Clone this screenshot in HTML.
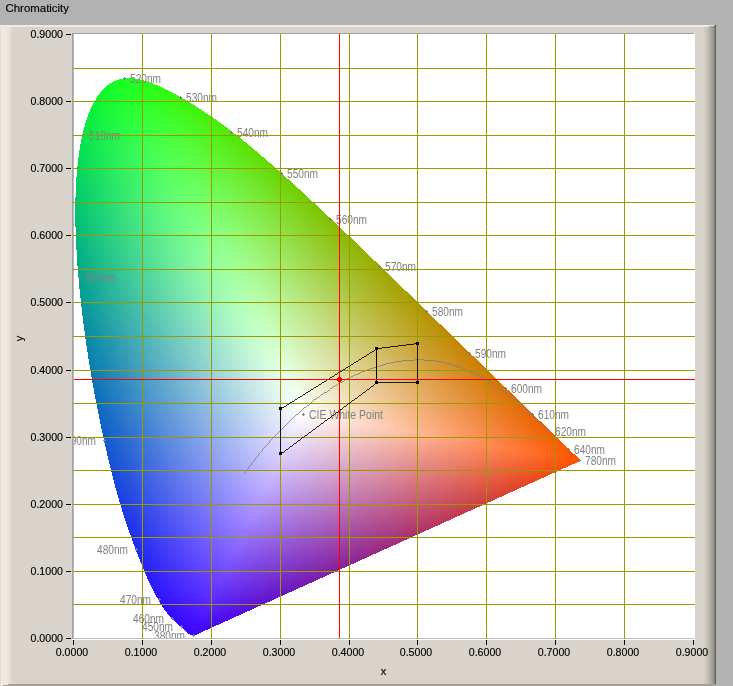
<!DOCTYPE html>
<html><head><meta charset="utf-8"><title>Chromaticity</title><style>html,body{margin:0;padding:0;background:#b2b2b2;overflow:hidden}svg{display:block;will-change:transform}</style></head><body>
<svg width="733" height="686" viewBox="0 0 733 686" font-family="'Liberation Sans', sans-serif">
<defs>
<linearGradient id="bl" x1="0" x2="1" y1="0" y2="0"><stop offset="0" stop-color="#d6d2c6"/><stop offset="0.08" stop-color="#efebe1"/><stop offset="0.6" stop-color="#ebe7dc"/><stop offset="1" stop-color="#d8d4cc"/></linearGradient>
<linearGradient id="br" x1="0" x2="1" y1="0" y2="0"><stop offset="0" stop-color="#d8d4cc"/><stop offset="0.3" stop-color="#c8c4ba"/><stop offset="0.7" stop-color="#a5a198"/><stop offset="0.88" stop-color="#8c8880"/><stop offset="1" stop-color="#4e4c47"/></linearGradient>
<clipPath id="pc"><rect x="74" y="34" width="621" height="604"/></clipPath>
<linearGradient id="w0" gradientUnits="userSpaceOnUse" x1="303.1" y1="413.7" x2="106.6" y2="453.8"><stop offset="0" stop-color="#ffffff"/><stop offset="1" stop-color="#0d67c1"/></linearGradient><linearGradient id="w1" gradientUnits="userSpaceOnUse" x1="303.1" y1="413.7" x2="105.9" y2="452.1"><stop offset="0" stop-color="#ffffff"/><stop offset="1" stop-color="#0c68c0"/></linearGradient><linearGradient id="w2" gradientUnits="userSpaceOnUse" x1="303.1" y1="413.7" x2="105.7" y2="451.6"><stop offset="0" stop-color="#ffffff"/><stop offset="1" stop-color="#0c6abf"/></linearGradient><linearGradient id="w3" gradientUnits="userSpaceOnUse" x1="303.1" y1="413.7" x2="105.7" y2="451.6"><stop offset="0" stop-color="#ffffff"/><stop offset="1" stop-color="#0c6bbe"/></linearGradient><linearGradient id="w4" gradientUnits="userSpaceOnUse" x1="303.1" y1="413.7" x2="105.7" y2="451.6"><stop offset="0" stop-color="#ffffff"/><stop offset="1" stop-color="#0c6cbd"/></linearGradient><linearGradient id="w5" gradientUnits="userSpaceOnUse" x1="303.1" y1="413.7" x2="105.7" y2="451.6"><stop offset="0" stop-color="#ffffff"/><stop offset="1" stop-color="#0b6dbc"/></linearGradient><linearGradient id="w6" gradientUnits="userSpaceOnUse" x1="303.1" y1="413.7" x2="105.7" y2="451.6"><stop offset="0" stop-color="#ffffff"/><stop offset="1" stop-color="#0b6fbb"/></linearGradient><linearGradient id="w7" gradientUnits="userSpaceOnUse" x1="303.1" y1="413.7" x2="104.6" y2="449.5"><stop offset="0" stop-color="#ffffff"/><stop offset="1" stop-color="#0b70ba"/></linearGradient><linearGradient id="w8" gradientUnits="userSpaceOnUse" x1="303.1" y1="413.7" x2="104.5" y2="449.4"><stop offset="0" stop-color="#ffffff"/><stop offset="1" stop-color="#0b71b9"/></linearGradient><linearGradient id="w9" gradientUnits="userSpaceOnUse" x1="303.1" y1="413.7" x2="104.5" y2="449.4"><stop offset="0" stop-color="#ffffff"/><stop offset="1" stop-color="#0a72b8"/></linearGradient><linearGradient id="w10" gradientUnits="userSpaceOnUse" x1="303.1" y1="413.7" x2="104.5" y2="449.4"><stop offset="0" stop-color="#ffffff"/><stop offset="1" stop-color="#0a74b7"/></linearGradient><linearGradient id="w11" gradientUnits="userSpaceOnUse" x1="303.1" y1="413.7" x2="104.5" y2="449.4"><stop offset="0" stop-color="#ffffff"/><stop offset="1" stop-color="#0a75b6"/></linearGradient><linearGradient id="w12" gradientUnits="userSpaceOnUse" x1="303.1" y1="413.7" x2="104.2" y2="448.8"><stop offset="0" stop-color="#ffffff"/><stop offset="1" stop-color="#0a76b5"/></linearGradient><linearGradient id="w13" gradientUnits="userSpaceOnUse" x1="303.1" y1="413.7" x2="103.2" y2="447.1"><stop offset="0" stop-color="#ffffff"/><stop offset="1" stop-color="#0978b4"/></linearGradient><linearGradient id="w14" gradientUnits="userSpaceOnUse" x1="303.1" y1="413.7" x2="103.2" y2="447.1"><stop offset="0" stop-color="#ffffff"/><stop offset="1" stop-color="#0979b2"/></linearGradient><linearGradient id="w15" gradientUnits="userSpaceOnUse" x1="303.1" y1="413.7" x2="103.2" y2="447.1"><stop offset="0" stop-color="#ffffff"/><stop offset="1" stop-color="#097ab1"/></linearGradient><linearGradient id="w16" gradientUnits="userSpaceOnUse" x1="303.1" y1="413.7" x2="103.2" y2="447.1"><stop offset="0" stop-color="#ffffff"/><stop offset="1" stop-color="#097cb0"/></linearGradient><linearGradient id="w17" gradientUnits="userSpaceOnUse" x1="303.1" y1="413.7" x2="103.2" y2="447.1"><stop offset="0" stop-color="#ffffff"/><stop offset="1" stop-color="#087daf"/></linearGradient><linearGradient id="w18" gradientUnits="userSpaceOnUse" x1="303.1" y1="413.7" x2="102.2" y2="445.4"><stop offset="0" stop-color="#ffffff"/><stop offset="1" stop-color="#087eae"/></linearGradient><linearGradient id="w19" gradientUnits="userSpaceOnUse" x1="303.1" y1="413.7" x2="101.7" y2="444.7"><stop offset="0" stop-color="#ffffff"/><stop offset="1" stop-color="#0880ad"/></linearGradient><linearGradient id="w20" gradientUnits="userSpaceOnUse" x1="303.1" y1="413.7" x2="101.7" y2="444.7"><stop offset="0" stop-color="#ffffff"/><stop offset="1" stop-color="#0881ab"/></linearGradient><linearGradient id="w21" gradientUnits="userSpaceOnUse" x1="303.1" y1="413.7" x2="101.7" y2="444.7"><stop offset="0" stop-color="#ffffff"/><stop offset="1" stop-color="#0783aa"/></linearGradient><linearGradient id="w22" gradientUnits="userSpaceOnUse" x1="303.1" y1="413.7" x2="101.7" y2="444.7"><stop offset="0" stop-color="#ffffff"/><stop offset="1" stop-color="#0784a9"/></linearGradient><linearGradient id="w23" gradientUnits="userSpaceOnUse" x1="303.1" y1="413.7" x2="101.1" y2="443.7"><stop offset="0" stop-color="#ffffff"/><stop offset="1" stop-color="#0786a8"/></linearGradient><linearGradient id="w24" gradientUnits="userSpaceOnUse" x1="303.1" y1="413.7" x2="100.0" y2="442.1"><stop offset="0" stop-color="#ffffff"/><stop offset="1" stop-color="#0787a6"/></linearGradient><linearGradient id="w25" gradientUnits="userSpaceOnUse" x1="303.1" y1="413.7" x2="100.0" y2="442.1"><stop offset="0" stop-color="#ffffff"/><stop offset="1" stop-color="#0689a5"/></linearGradient><linearGradient id="w26" gradientUnits="userSpaceOnUse" x1="303.1" y1="413.7" x2="100.0" y2="442.1"><stop offset="0" stop-color="#ffffff"/><stop offset="1" stop-color="#068aa4"/></linearGradient><linearGradient id="w27" gradientUnits="userSpaceOnUse" x1="303.1" y1="413.7" x2="100.0" y2="442.1"><stop offset="0" stop-color="#ffffff"/><stop offset="1" stop-color="#068ca2"/></linearGradient><linearGradient id="w28" gradientUnits="userSpaceOnUse" x1="303.1" y1="413.7" x2="99.2" y2="441.1"><stop offset="0" stop-color="#ffffff"/><stop offset="1" stop-color="#068da1"/></linearGradient><linearGradient id="w29" gradientUnits="userSpaceOnUse" x1="303.1" y1="413.7" x2="98.0" y2="439.4"><stop offset="0" stop-color="#ffffff"/><stop offset="1" stop-color="#058fa0"/></linearGradient><linearGradient id="w30" gradientUnits="userSpaceOnUse" x1="303.1" y1="413.7" x2="98.0" y2="439.4"><stop offset="0" stop-color="#ffffff"/><stop offset="1" stop-color="#05919e"/></linearGradient><linearGradient id="w31" gradientUnits="userSpaceOnUse" x1="303.1" y1="413.7" x2="98.0" y2="439.4"><stop offset="0" stop-color="#ffffff"/><stop offset="1" stop-color="#05929d"/></linearGradient><linearGradient id="w32" gradientUnits="userSpaceOnUse" x1="303.1" y1="413.7" x2="98.0" y2="439.4"><stop offset="0" stop-color="#ffffff"/><stop offset="1" stop-color="#05949b"/></linearGradient><linearGradient id="w33" gradientUnits="userSpaceOnUse" x1="303.1" y1="413.7" x2="96.5" y2="437.5"><stop offset="0" stop-color="#ffffff"/><stop offset="1" stop-color="#05969a"/></linearGradient><linearGradient id="w34" gradientUnits="userSpaceOnUse" x1="303.1" y1="413.7" x2="95.7" y2="436.6"><stop offset="0" stop-color="#ffffff"/><stop offset="1" stop-color="#049798"/></linearGradient><linearGradient id="w35" gradientUnits="userSpaceOnUse" x1="303.1" y1="413.7" x2="95.7" y2="436.6"><stop offset="0" stop-color="#ffffff"/><stop offset="1" stop-color="#049997"/></linearGradient><linearGradient id="w36" gradientUnits="userSpaceOnUse" x1="303.1" y1="413.7" x2="95.7" y2="436.6"><stop offset="0" stop-color="#ffffff"/><stop offset="1" stop-color="#049b95"/></linearGradient><linearGradient id="w37" gradientUnits="userSpaceOnUse" x1="303.1" y1="413.7" x2="95.1" y2="435.7"><stop offset="0" stop-color="#ffffff"/><stop offset="1" stop-color="#049d93"/></linearGradient><linearGradient id="w38" gradientUnits="userSpaceOnUse" x1="303.1" y1="413.7" x2="93.2" y2="433.6"><stop offset="0" stop-color="#ffffff"/><stop offset="1" stop-color="#039e92"/></linearGradient><linearGradient id="w39" gradientUnits="userSpaceOnUse" x1="303.1" y1="413.7" x2="93.2" y2="433.6"><stop offset="0" stop-color="#ffffff"/><stop offset="1" stop-color="#03a090"/></linearGradient><linearGradient id="w40" gradientUnits="userSpaceOnUse" x1="303.1" y1="413.7" x2="93.2" y2="433.6"><stop offset="0" stop-color="#ffffff"/><stop offset="1" stop-color="#03a28e"/></linearGradient><linearGradient id="w41" gradientUnits="userSpaceOnUse" x1="303.1" y1="413.7" x2="92.7" y2="433.0"><stop offset="0" stop-color="#ffffff"/><stop offset="1" stop-color="#03a48d"/></linearGradient><linearGradient id="w42" gradientUnits="userSpaceOnUse" x1="303.1" y1="413.7" x2="90.4" y2="430.4"><stop offset="0" stop-color="#ffffff"/><stop offset="1" stop-color="#03a68b"/></linearGradient><linearGradient id="w43" gradientUnits="userSpaceOnUse" x1="303.1" y1="413.7" x2="90.4" y2="430.4"><stop offset="0" stop-color="#ffffff"/><stop offset="1" stop-color="#03a889"/></linearGradient><linearGradient id="w44" gradientUnits="userSpaceOnUse" x1="303.1" y1="413.7" x2="90.4" y2="430.4"><stop offset="0" stop-color="#ffffff"/><stop offset="1" stop-color="#02aa87"/></linearGradient><linearGradient id="w45" gradientUnits="userSpaceOnUse" x1="303.1" y1="413.7" x2="89.1" y2="428.9"><stop offset="0" stop-color="#ffffff"/><stop offset="1" stop-color="#02ac85"/></linearGradient><linearGradient id="w46" gradientUnits="userSpaceOnUse" x1="303.1" y1="413.7" x2="87.1" y2="426.7"><stop offset="0" stop-color="#ffffff"/><stop offset="1" stop-color="#02ae83"/></linearGradient><linearGradient id="w47" gradientUnits="userSpaceOnUse" x1="303.1" y1="413.7" x2="87.1" y2="426.7"><stop offset="0" stop-color="#ffffff"/><stop offset="1" stop-color="#02b081"/></linearGradient><linearGradient id="w48" gradientUnits="userSpaceOnUse" x1="303.1" y1="413.7" x2="87.1" y2="426.7"><stop offset="0" stop-color="#ffffff"/><stop offset="1" stop-color="#02b27f"/></linearGradient><linearGradient id="w49" gradientUnits="userSpaceOnUse" x1="303.1" y1="413.7" x2="83.3" y2="422.5"><stop offset="0" stop-color="#ffffff"/><stop offset="1" stop-color="#02b57d"/></linearGradient><linearGradient id="w50" gradientUnits="userSpaceOnUse" x1="303.1" y1="413.7" x2="83.1" y2="422.3"><stop offset="0" stop-color="#ffffff"/><stop offset="1" stop-color="#02b77b"/></linearGradient><linearGradient id="w51" gradientUnits="userSpaceOnUse" x1="303.1" y1="413.7" x2="83.1" y2="422.3"><stop offset="0" stop-color="#ffffff"/><stop offset="1" stop-color="#01b979"/></linearGradient><linearGradient id="w52" gradientUnits="userSpaceOnUse" x1="303.1" y1="413.7" x2="79.6" y2="418.4"><stop offset="0" stop-color="#ffffff"/><stop offset="1" stop-color="#01bb76"/></linearGradient><linearGradient id="w53" gradientUnits="userSpaceOnUse" x1="303.1" y1="413.7" x2="78.5" y2="417.2"><stop offset="0" stop-color="#ffffff"/><stop offset="1" stop-color="#01be74"/></linearGradient><linearGradient id="w54" gradientUnits="userSpaceOnUse" x1="303.1" y1="413.7" x2="78.5" y2="417.2"><stop offset="0" stop-color="#ffffff"/><stop offset="1" stop-color="#01c072"/></linearGradient><linearGradient id="w55" gradientUnits="userSpaceOnUse" x1="303.1" y1="413.7" x2="74.1" y2="412.2"><stop offset="0" stop-color="#ffffff"/><stop offset="1" stop-color="#01c26f"/></linearGradient><linearGradient id="w56" gradientUnits="userSpaceOnUse" x1="303.1" y1="413.7" x2="73.2" y2="411.3"><stop offset="0" stop-color="#ffffff"/><stop offset="1" stop-color="#01c56d"/></linearGradient><linearGradient id="w57" gradientUnits="userSpaceOnUse" x1="303.1" y1="413.7" x2="72.5" y2="410.4"><stop offset="0" stop-color="#ffffff"/><stop offset="1" stop-color="#01c76a"/></linearGradient><linearGradient id="w58" gradientUnits="userSpaceOnUse" x1="303.1" y1="413.7" x2="67.6" y2="404.6"><stop offset="0" stop-color="#ffffff"/><stop offset="1" stop-color="#01ca68"/></linearGradient><linearGradient id="w59" gradientUnits="userSpaceOnUse" x1="303.1" y1="413.7" x2="67.6" y2="404.6"><stop offset="0" stop-color="#ffffff"/><stop offset="1" stop-color="#02cc65"/></linearGradient><linearGradient id="w60" gradientUnits="userSpaceOnUse" x1="303.1" y1="413.7" x2="63.8" y2="400.0"><stop offset="0" stop-color="#ffffff"/><stop offset="1" stop-color="#02cf62"/></linearGradient><linearGradient id="w61" gradientUnits="userSpaceOnUse" x1="303.1" y1="413.7" x2="61.3" y2="396.9"><stop offset="0" stop-color="#ffffff"/><stop offset="1" stop-color="#02d260"/></linearGradient><linearGradient id="w62" gradientUnits="userSpaceOnUse" x1="303.1" y1="413.7" x2="59.5" y2="394.6"><stop offset="0" stop-color="#ffffff"/><stop offset="1" stop-color="#02d45d"/></linearGradient><linearGradient id="w63" gradientUnits="userSpaceOnUse" x1="303.1" y1="413.7" x2="54.1" y2="387.4"><stop offset="0" stop-color="#ffffff"/><stop offset="1" stop-color="#02d75a"/></linearGradient><linearGradient id="w64" gradientUnits="userSpaceOnUse" x1="303.1" y1="413.7" x2="53.7" y2="386.8"><stop offset="0" stop-color="#ffffff"/><stop offset="1" stop-color="#03da57"/></linearGradient><linearGradient id="w65" gradientUnits="userSpaceOnUse" x1="303.1" y1="413.7" x2="46.1" y2="375.5"><stop offset="0" stop-color="#ffffff"/><stop offset="1" stop-color="#03dc54"/></linearGradient><linearGradient id="w66" gradientUnits="userSpaceOnUse" x1="303.1" y1="413.7" x2="46.0" y2="375.5"><stop offset="0" stop-color="#ffffff"/><stop offset="1" stop-color="#03df51"/></linearGradient><linearGradient id="w67" gradientUnits="userSpaceOnUse" x1="303.1" y1="413.7" x2="37.3" y2="360.7"><stop offset="0" stop-color="#ffffff"/><stop offset="1" stop-color="#04e24d"/></linearGradient><linearGradient id="w68" gradientUnits="userSpaceOnUse" x1="303.1" y1="413.7" x2="36.6" y2="359.3"><stop offset="0" stop-color="#ffffff"/><stop offset="1" stop-color="#05e44a"/></linearGradient><linearGradient id="w69" gradientUnits="userSpaceOnUse" x1="303.1" y1="413.7" x2="28.6" y2="342.5"><stop offset="0" stop-color="#ffffff"/><stop offset="1" stop-color="#05e747"/></linearGradient><linearGradient id="w70" gradientUnits="userSpaceOnUse" x1="303.1" y1="413.7" x2="26.3" y2="337.0"><stop offset="0" stop-color="#ffffff"/><stop offset="1" stop-color="#06ea44"/></linearGradient><linearGradient id="w71" gradientUnits="userSpaceOnUse" x1="303.1" y1="413.7" x2="20.6" y2="321.0"><stop offset="0" stop-color="#ffffff"/><stop offset="1" stop-color="#07ec40"/></linearGradient><linearGradient id="w72" gradientUnits="userSpaceOnUse" x1="303.1" y1="413.7" x2="16.5" y2="305.8"><stop offset="0" stop-color="#ffffff"/><stop offset="1" stop-color="#08ef3d"/></linearGradient><linearGradient id="w73" gradientUnits="userSpaceOnUse" x1="303.1" y1="413.7" x2="14.1" y2="294.0"><stop offset="0" stop-color="#ffffff"/><stop offset="1" stop-color="#09f139"/></linearGradient><linearGradient id="w74" gradientUnits="userSpaceOnUse" x1="303.1" y1="413.7" x2="11.0" y2="260.0"><stop offset="0" stop-color="#ffffff"/><stop offset="1" stop-color="#0af336"/></linearGradient><linearGradient id="w75" gradientUnits="userSpaceOnUse" x1="303.1" y1="413.7" x2="12.0" y2="238.1"><stop offset="0" stop-color="#ffffff"/><stop offset="1" stop-color="#0bf633"/></linearGradient><linearGradient id="w76" gradientUnits="userSpaceOnUse" x1="303.1" y1="413.7" x2="16.7" y2="210.2"><stop offset="0" stop-color="#ffffff"/><stop offset="1" stop-color="#0df82f"/></linearGradient><linearGradient id="w77" gradientUnits="userSpaceOnUse" x1="303.1" y1="413.7" x2="31.5" y2="168.8"><stop offset="0" stop-color="#ffffff"/><stop offset="1" stop-color="#0ff92c"/></linearGradient><linearGradient id="w78" gradientUnits="userSpaceOnUse" x1="303.1" y1="413.7" x2="58.1" y2="127.8"><stop offset="0" stop-color="#ffffff"/><stop offset="1" stop-color="#10fb29"/></linearGradient><linearGradient id="w79" gradientUnits="userSpaceOnUse" x1="303.1" y1="413.7" x2="93.1" y2="94.9"><stop offset="0" stop-color="#ffffff"/><stop offset="1" stop-color="#12fd25"/></linearGradient><linearGradient id="w80" gradientUnits="userSpaceOnUse" x1="303.1" y1="413.7" x2="140.8" y2="68.9"><stop offset="0" stop-color="#ffffff"/><stop offset="1" stop-color="#15fe22"/></linearGradient><linearGradient id="w81" gradientUnits="userSpaceOnUse" x1="303.1" y1="413.7" x2="198.2" y2="56.3"><stop offset="0" stop-color="#ffffff"/><stop offset="1" stop-color="#17fe1f"/></linearGradient><linearGradient id="w82" gradientUnits="userSpaceOnUse" x1="303.1" y1="413.7" x2="258.4" y2="61.4"><stop offset="0" stop-color="#ffffff"/><stop offset="1" stop-color="#1aff1d"/></linearGradient><linearGradient id="w83" gradientUnits="userSpaceOnUse" x1="303.1" y1="413.7" x2="311.6" y2="82.8"><stop offset="0" stop-color="#ffffff"/><stop offset="1" stop-color="#1cff1a"/></linearGradient><linearGradient id="w84" gradientUnits="userSpaceOnUse" x1="303.1" y1="413.7" x2="349.8" y2="111.9"><stop offset="0" stop-color="#ffffff"/><stop offset="1" stop-color="#1fff18"/></linearGradient><linearGradient id="w85" gradientUnits="userSpaceOnUse" x1="303.1" y1="413.7" x2="373.7" y2="139.7"><stop offset="0" stop-color="#ffffff"/><stop offset="1" stop-color="#22fe16"/></linearGradient><linearGradient id="w86" gradientUnits="userSpaceOnUse" x1="303.1" y1="413.7" x2="387.7" y2="162.5"><stop offset="0" stop-color="#ffffff"/><stop offset="1" stop-color="#25fd14"/></linearGradient><linearGradient id="w87" gradientUnits="userSpaceOnUse" x1="303.1" y1="413.7" x2="396.1" y2="180.7"><stop offset="0" stop-color="#ffffff"/><stop offset="1" stop-color="#29fc12"/></linearGradient><linearGradient id="w88" gradientUnits="userSpaceOnUse" x1="303.1" y1="413.7" x2="401.8" y2="196.4"><stop offset="0" stop-color="#ffffff"/><stop offset="1" stop-color="#2cfb10"/></linearGradient><linearGradient id="w89" gradientUnits="userSpaceOnUse" x1="303.1" y1="413.7" x2="405.5" y2="209.3"><stop offset="0" stop-color="#ffffff"/><stop offset="1" stop-color="#2ffa0f"/></linearGradient><linearGradient id="w90" gradientUnits="userSpaceOnUse" x1="303.1" y1="413.7" x2="407.6" y2="218.6"><stop offset="0" stop-color="#ffffff"/><stop offset="1" stop-color="#32f80e"/></linearGradient><linearGradient id="w91" gradientUnits="userSpaceOnUse" x1="303.1" y1="413.7" x2="408.9" y2="225.8"><stop offset="0" stop-color="#ffffff"/><stop offset="1" stop-color="#35f70c"/></linearGradient><linearGradient id="w92" gradientUnits="userSpaceOnUse" x1="303.1" y1="413.7" x2="409.9" y2="231.6"><stop offset="0" stop-color="#ffffff"/><stop offset="1" stop-color="#38f50b"/></linearGradient><linearGradient id="w93" gradientUnits="userSpaceOnUse" x1="303.1" y1="413.7" x2="410.7" y2="237.2"><stop offset="0" stop-color="#ffffff"/><stop offset="1" stop-color="#3bf30a"/></linearGradient><linearGradient id="w94" gradientUnits="userSpaceOnUse" x1="303.1" y1="413.7" x2="411.4" y2="242.8"><stop offset="0" stop-color="#ffffff"/><stop offset="1" stop-color="#3ef209"/></linearGradient><linearGradient id="w95" gradientUnits="userSpaceOnUse" x1="303.1" y1="413.7" x2="411.9" y2="248.4"><stop offset="0" stop-color="#ffffff"/><stop offset="1" stop-color="#41f008"/></linearGradient><linearGradient id="w96" gradientUnits="userSpaceOnUse" x1="303.1" y1="413.7" x2="412.3" y2="253.6"><stop offset="0" stop-color="#ffffff"/><stop offset="1" stop-color="#44ee08"/></linearGradient><linearGradient id="w97" gradientUnits="userSpaceOnUse" x1="303.1" y1="413.7" x2="412.6" y2="258.1"><stop offset="0" stop-color="#ffffff"/><stop offset="1" stop-color="#47ed07"/></linearGradient><linearGradient id="w98" gradientUnits="userSpaceOnUse" x1="303.1" y1="413.7" x2="412.8" y2="262.2"><stop offset="0" stop-color="#ffffff"/><stop offset="1" stop-color="#49eb06"/></linearGradient><linearGradient id="w99" gradientUnits="userSpaceOnUse" x1="303.1" y1="413.7" x2="412.9" y2="266.0"><stop offset="0" stop-color="#ffffff"/><stop offset="1" stop-color="#4ce906"/></linearGradient><linearGradient id="w100" gradientUnits="userSpaceOnUse" x1="303.1" y1="413.7" x2="413.0" y2="269.4"><stop offset="0" stop-color="#ffffff"/><stop offset="1" stop-color="#4ee805"/></linearGradient><linearGradient id="w101" gradientUnits="userSpaceOnUse" x1="303.1" y1="413.7" x2="413.0" y2="272.5"><stop offset="0" stop-color="#ffffff"/><stop offset="1" stop-color="#51e605"/></linearGradient><linearGradient id="w102" gradientUnits="userSpaceOnUse" x1="303.1" y1="413.7" x2="413.0" y2="275.2"><stop offset="0" stop-color="#ffffff"/><stop offset="1" stop-color="#53e404"/></linearGradient><linearGradient id="w103" gradientUnits="userSpaceOnUse" x1="303.1" y1="413.7" x2="413.0" y2="277.6"><stop offset="0" stop-color="#ffffff"/><stop offset="1" stop-color="#56e204"/></linearGradient><linearGradient id="w104" gradientUnits="userSpaceOnUse" x1="303.1" y1="413.7" x2="413.0" y2="279.7"><stop offset="0" stop-color="#ffffff"/><stop offset="1" stop-color="#58e104"/></linearGradient><linearGradient id="w105" gradientUnits="userSpaceOnUse" x1="303.1" y1="413.7" x2="413.0" y2="281.6"><stop offset="0" stop-color="#ffffff"/><stop offset="1" stop-color="#5adf03"/></linearGradient><linearGradient id="w106" gradientUnits="userSpaceOnUse" x1="303.1" y1="413.7" x2="413.0" y2="283.3"><stop offset="0" stop-color="#ffffff"/><stop offset="1" stop-color="#5cde03"/></linearGradient><linearGradient id="w107" gradientUnits="userSpaceOnUse" x1="303.1" y1="413.7" x2="413.0" y2="284.8"><stop offset="0" stop-color="#ffffff"/><stop offset="1" stop-color="#5edc03"/></linearGradient><linearGradient id="w108" gradientUnits="userSpaceOnUse" x1="303.1" y1="413.7" x2="413.0" y2="286.1"><stop offset="0" stop-color="#ffffff"/><stop offset="1" stop-color="#60da03"/></linearGradient><linearGradient id="w109" gradientUnits="userSpaceOnUse" x1="303.1" y1="413.7" x2="413.0" y2="287.6"><stop offset="0" stop-color="#ffffff"/><stop offset="1" stop-color="#62d902"/></linearGradient><linearGradient id="w110" gradientUnits="userSpaceOnUse" x1="303.1" y1="413.7" x2="413.0" y2="288.6"><stop offset="0" stop-color="#ffffff"/><stop offset="1" stop-color="#64d702"/></linearGradient><linearGradient id="w111" gradientUnits="userSpaceOnUse" x1="303.1" y1="413.7" x2="413.0" y2="289.4"><stop offset="0" stop-color="#ffffff"/><stop offset="1" stop-color="#66d602"/></linearGradient><linearGradient id="w112" gradientUnits="userSpaceOnUse" x1="303.1" y1="413.7" x2="413.0" y2="290.2"><stop offset="0" stop-color="#ffffff"/><stop offset="1" stop-color="#68d502"/></linearGradient><linearGradient id="w113" gradientUnits="userSpaceOnUse" x1="303.1" y1="413.7" x2="413.0" y2="291.2"><stop offset="0" stop-color="#ffffff"/><stop offset="1" stop-color="#69d302"/></linearGradient><linearGradient id="w114" gradientUnits="userSpaceOnUse" x1="303.1" y1="413.7" x2="413.1" y2="291.7"><stop offset="0" stop-color="#ffffff"/><stop offset="1" stop-color="#6bd202"/></linearGradient><linearGradient id="w115" gradientUnits="userSpaceOnUse" x1="303.1" y1="413.7" x2="413.1" y2="292.2"><stop offset="0" stop-color="#ffffff"/><stop offset="1" stop-color="#6dd002"/></linearGradient><linearGradient id="w116" gradientUnits="userSpaceOnUse" x1="303.1" y1="413.7" x2="413.1" y2="293.1"><stop offset="0" stop-color="#ffffff"/><stop offset="1" stop-color="#6ecf02"/></linearGradient><linearGradient id="w117" gradientUnits="userSpaceOnUse" x1="303.1" y1="413.7" x2="413.1" y2="293.4"><stop offset="0" stop-color="#ffffff"/><stop offset="1" stop-color="#70ce01"/></linearGradient><linearGradient id="w118" gradientUnits="userSpaceOnUse" x1="303.1" y1="413.7" x2="413.2" y2="293.9"><stop offset="0" stop-color="#ffffff"/><stop offset="1" stop-color="#71cd01"/></linearGradient><linearGradient id="w119" gradientUnits="userSpaceOnUse" x1="303.1" y1="413.7" x2="413.2" y2="294.4"><stop offset="0" stop-color="#ffffff"/><stop offset="1" stop-color="#73cb01"/></linearGradient><linearGradient id="w120" gradientUnits="userSpaceOnUse" x1="303.1" y1="413.7" x2="413.2" y2="294.6"><stop offset="0" stop-color="#ffffff"/><stop offset="1" stop-color="#74ca01"/></linearGradient><linearGradient id="w121" gradientUnits="userSpaceOnUse" x1="303.1" y1="413.7" x2="413.3" y2="295.2"><stop offset="0" stop-color="#ffffff"/><stop offset="1" stop-color="#76c901"/></linearGradient><linearGradient id="w122" gradientUnits="userSpaceOnUse" x1="303.1" y1="413.7" x2="413.3" y2="295.3"><stop offset="0" stop-color="#ffffff"/><stop offset="1" stop-color="#77c801"/></linearGradient><linearGradient id="w123" gradientUnits="userSpaceOnUse" x1="303.1" y1="413.7" x2="413.3" y2="295.7"><stop offset="0" stop-color="#ffffff"/><stop offset="1" stop-color="#79c701"/></linearGradient><linearGradient id="w124" gradientUnits="userSpaceOnUse" x1="303.1" y1="413.7" x2="413.3" y2="295.9"><stop offset="0" stop-color="#ffffff"/><stop offset="1" stop-color="#7ac501"/></linearGradient><linearGradient id="w125" gradientUnits="userSpaceOnUse" x1="303.1" y1="413.7" x2="413.4" y2="296.2"><stop offset="0" stop-color="#ffffff"/><stop offset="1" stop-color="#7bc401"/></linearGradient><linearGradient id="w126" gradientUnits="userSpaceOnUse" x1="303.1" y1="413.7" x2="413.4" y2="296.3"><stop offset="0" stop-color="#ffffff"/><stop offset="1" stop-color="#7cc301"/></linearGradient><linearGradient id="w127" gradientUnits="userSpaceOnUse" x1="303.1" y1="413.7" x2="413.4" y2="296.5"><stop offset="0" stop-color="#ffffff"/><stop offset="1" stop-color="#7ec201"/></linearGradient><linearGradient id="w128" gradientUnits="userSpaceOnUse" x1="303.1" y1="413.7" x2="413.5" y2="296.7"><stop offset="0" stop-color="#ffffff"/><stop offset="1" stop-color="#7fc101"/></linearGradient><linearGradient id="w129" gradientUnits="userSpaceOnUse" x1="303.1" y1="413.7" x2="413.5" y2="296.9"><stop offset="0" stop-color="#ffffff"/><stop offset="1" stop-color="#80c001"/></linearGradient><linearGradient id="w130" gradientUnits="userSpaceOnUse" x1="303.1" y1="413.7" x2="413.5" y2="297.0"><stop offset="0" stop-color="#ffffff"/><stop offset="1" stop-color="#81bf01"/></linearGradient><linearGradient id="w131" gradientUnits="userSpaceOnUse" x1="303.1" y1="413.7" x2="413.6" y2="297.2"><stop offset="0" stop-color="#ffffff"/><stop offset="1" stop-color="#82be01"/></linearGradient><linearGradient id="w132" gradientUnits="userSpaceOnUse" x1="303.1" y1="413.7" x2="413.6" y2="297.2"><stop offset="0" stop-color="#ffffff"/><stop offset="1" stop-color="#84bd01"/></linearGradient><linearGradient id="w133" gradientUnits="userSpaceOnUse" x1="303.1" y1="413.7" x2="413.6" y2="297.4"><stop offset="0" stop-color="#ffffff"/><stop offset="1" stop-color="#85bc01"/></linearGradient><linearGradient id="w134" gradientUnits="userSpaceOnUse" x1="303.1" y1="413.7" x2="413.6" y2="297.4"><stop offset="0" stop-color="#ffffff"/><stop offset="1" stop-color="#86bb01"/></linearGradient><linearGradient id="w135" gradientUnits="userSpaceOnUse" x1="303.1" y1="413.7" x2="413.7" y2="297.6"><stop offset="0" stop-color="#ffffff"/><stop offset="1" stop-color="#87ba01"/></linearGradient><linearGradient id="w136" gradientUnits="userSpaceOnUse" x1="303.1" y1="413.7" x2="413.7" y2="297.6"><stop offset="0" stop-color="#ffffff"/><stop offset="1" stop-color="#88ba01"/></linearGradient><linearGradient id="w137" gradientUnits="userSpaceOnUse" x1="303.1" y1="413.7" x2="413.7" y2="297.7"><stop offset="0" stop-color="#ffffff"/><stop offset="1" stop-color="#89b901"/></linearGradient><linearGradient id="w138" gradientUnits="userSpaceOnUse" x1="303.1" y1="413.7" x2="413.7" y2="297.9"><stop offset="0" stop-color="#ffffff"/><stop offset="1" stop-color="#8ab801"/></linearGradient><linearGradient id="w139" gradientUnits="userSpaceOnUse" x1="303.1" y1="413.7" x2="413.7" y2="297.9"><stop offset="0" stop-color="#ffffff"/><stop offset="1" stop-color="#8bb701"/></linearGradient><linearGradient id="w140" gradientUnits="userSpaceOnUse" x1="303.1" y1="413.7" x2="413.8" y2="298.0"><stop offset="0" stop-color="#ffffff"/><stop offset="1" stop-color="#8cb601"/></linearGradient><linearGradient id="w141" gradientUnits="userSpaceOnUse" x1="303.1" y1="413.7" x2="413.8" y2="298.0"><stop offset="0" stop-color="#ffffff"/><stop offset="1" stop-color="#8db501"/></linearGradient><linearGradient id="w142" gradientUnits="userSpaceOnUse" x1="303.1" y1="413.7" x2="413.8" y2="298.1"><stop offset="0" stop-color="#ffffff"/><stop offset="1" stop-color="#8eb401"/></linearGradient><linearGradient id="w143" gradientUnits="userSpaceOnUse" x1="303.1" y1="413.7" x2="413.9" y2="298.2"><stop offset="0" stop-color="#ffffff"/><stop offset="1" stop-color="#8fb400"/></linearGradient><linearGradient id="w144" gradientUnits="userSpaceOnUse" x1="303.1" y1="413.7" x2="413.9" y2="298.2"><stop offset="0" stop-color="#ffffff"/><stop offset="1" stop-color="#90b300"/></linearGradient><linearGradient id="w145" gradientUnits="userSpaceOnUse" x1="303.1" y1="413.7" x2="413.9" y2="298.3"><stop offset="0" stop-color="#ffffff"/><stop offset="1" stop-color="#91b200"/></linearGradient><linearGradient id="w146" gradientUnits="userSpaceOnUse" x1="303.1" y1="413.7" x2="413.9" y2="298.4"><stop offset="0" stop-color="#ffffff"/><stop offset="1" stop-color="#92b100"/></linearGradient><linearGradient id="w147" gradientUnits="userSpaceOnUse" x1="303.1" y1="413.7" x2="413.9" y2="298.4"><stop offset="0" stop-color="#ffffff"/><stop offset="1" stop-color="#92b000"/></linearGradient><linearGradient id="w148" gradientUnits="userSpaceOnUse" x1="303.1" y1="413.7" x2="414.0" y2="298.5"><stop offset="0" stop-color="#ffffff"/><stop offset="1" stop-color="#93b000"/></linearGradient><linearGradient id="w149" gradientUnits="userSpaceOnUse" x1="303.1" y1="413.7" x2="414.0" y2="298.5"><stop offset="0" stop-color="#ffffff"/><stop offset="1" stop-color="#94af00"/></linearGradient><linearGradient id="w150" gradientUnits="userSpaceOnUse" x1="303.1" y1="413.7" x2="414.0" y2="298.5"><stop offset="0" stop-color="#ffffff"/><stop offset="1" stop-color="#95ae00"/></linearGradient><linearGradient id="w151" gradientUnits="userSpaceOnUse" x1="303.1" y1="413.7" x2="414.0" y2="298.6"><stop offset="0" stop-color="#ffffff"/><stop offset="1" stop-color="#96ad00"/></linearGradient><linearGradient id="w152" gradientUnits="userSpaceOnUse" x1="303.1" y1="413.7" x2="414.0" y2="298.6"><stop offset="0" stop-color="#ffffff"/><stop offset="1" stop-color="#97ad00"/></linearGradient><linearGradient id="w153" gradientUnits="userSpaceOnUse" x1="303.1" y1="413.7" x2="414.1" y2="298.7"><stop offset="0" stop-color="#ffffff"/><stop offset="1" stop-color="#98ac00"/></linearGradient><linearGradient id="w154" gradientUnits="userSpaceOnUse" x1="303.1" y1="413.7" x2="414.1" y2="298.7"><stop offset="0" stop-color="#ffffff"/><stop offset="1" stop-color="#98ab00"/></linearGradient><linearGradient id="w155" gradientUnits="userSpaceOnUse" x1="303.1" y1="413.7" x2="414.1" y2="298.7"><stop offset="0" stop-color="#ffffff"/><stop offset="1" stop-color="#99aa00"/></linearGradient><linearGradient id="w156" gradientUnits="userSpaceOnUse" x1="303.1" y1="413.7" x2="414.1" y2="298.8"><stop offset="0" stop-color="#ffffff"/><stop offset="1" stop-color="#9aaa00"/></linearGradient><linearGradient id="w157" gradientUnits="userSpaceOnUse" x1="303.1" y1="413.7" x2="414.1" y2="298.8"><stop offset="0" stop-color="#ffffff"/><stop offset="1" stop-color="#9ba900"/></linearGradient><linearGradient id="w158" gradientUnits="userSpaceOnUse" x1="303.1" y1="413.7" x2="414.1" y2="298.8"><stop offset="0" stop-color="#ffffff"/><stop offset="1" stop-color="#9ca800"/></linearGradient><linearGradient id="w159" gradientUnits="userSpaceOnUse" x1="303.1" y1="413.7" x2="414.2" y2="298.9"><stop offset="0" stop-color="#ffffff"/><stop offset="1" stop-color="#9da700"/></linearGradient><linearGradient id="w160" gradientUnits="userSpaceOnUse" x1="303.1" y1="413.7" x2="414.2" y2="298.9"><stop offset="0" stop-color="#ffffff"/><stop offset="1" stop-color="#9da700"/></linearGradient><linearGradient id="w161" gradientUnits="userSpaceOnUse" x1="303.1" y1="413.7" x2="414.2" y2="298.9"><stop offset="0" stop-color="#ffffff"/><stop offset="1" stop-color="#9ea600"/></linearGradient><linearGradient id="w162" gradientUnits="userSpaceOnUse" x1="303.1" y1="413.7" x2="414.2" y2="298.9"><stop offset="0" stop-color="#ffffff"/><stop offset="1" stop-color="#9fa500"/></linearGradient><linearGradient id="w163" gradientUnits="userSpaceOnUse" x1="303.1" y1="413.7" x2="414.2" y2="299.0"><stop offset="0" stop-color="#ffffff"/><stop offset="1" stop-color="#a0a500"/></linearGradient><linearGradient id="w164" gradientUnits="userSpaceOnUse" x1="303.1" y1="413.7" x2="414.2" y2="299.0"><stop offset="0" stop-color="#ffffff"/><stop offset="1" stop-color="#a1a400"/></linearGradient><linearGradient id="w165" gradientUnits="userSpaceOnUse" x1="303.1" y1="413.7" x2="414.3" y2="299.0"><stop offset="0" stop-color="#ffffff"/><stop offset="1" stop-color="#a1a300"/></linearGradient><linearGradient id="w166" gradientUnits="userSpaceOnUse" x1="303.1" y1="413.7" x2="414.3" y2="299.0"><stop offset="0" stop-color="#ffffff"/><stop offset="1" stop-color="#a2a300"/></linearGradient><linearGradient id="w167" gradientUnits="userSpaceOnUse" x1="303.1" y1="413.7" x2="414.3" y2="299.0"><stop offset="0" stop-color="#ffffff"/><stop offset="1" stop-color="#a3a200"/></linearGradient><linearGradient id="w168" gradientUnits="userSpaceOnUse" x1="303.1" y1="413.7" x2="414.3" y2="299.0"><stop offset="0" stop-color="#ffffff"/><stop offset="1" stop-color="#a4a100"/></linearGradient><linearGradient id="w169" gradientUnits="userSpaceOnUse" x1="303.1" y1="413.7" x2="414.3" y2="299.1"><stop offset="0" stop-color="#ffffff"/><stop offset="1" stop-color="#a4a100"/></linearGradient><linearGradient id="w170" gradientUnits="userSpaceOnUse" x1="303.1" y1="413.7" x2="414.3" y2="299.1"><stop offset="0" stop-color="#ffffff"/><stop offset="1" stop-color="#a5a000"/></linearGradient><linearGradient id="w171" gradientUnits="userSpaceOnUse" x1="303.1" y1="413.7" x2="414.3" y2="299.1"><stop offset="0" stop-color="#ffffff"/><stop offset="1" stop-color="#a69f00"/></linearGradient><linearGradient id="w172" gradientUnits="userSpaceOnUse" x1="303.1" y1="413.7" x2="414.4" y2="299.1"><stop offset="0" stop-color="#ffffff"/><stop offset="1" stop-color="#a79f00"/></linearGradient><linearGradient id="w173" gradientUnits="userSpaceOnUse" x1="303.1" y1="413.7" x2="414.4" y2="299.1"><stop offset="0" stop-color="#ffffff"/><stop offset="1" stop-color="#a79e00"/></linearGradient><linearGradient id="w174" gradientUnits="userSpaceOnUse" x1="303.1" y1="413.7" x2="414.4" y2="299.1"><stop offset="0" stop-color="#ffffff"/><stop offset="1" stop-color="#a89d00"/></linearGradient><linearGradient id="w175" gradientUnits="userSpaceOnUse" x1="303.1" y1="413.7" x2="414.4" y2="299.1"><stop offset="0" stop-color="#ffffff"/><stop offset="1" stop-color="#a99d00"/></linearGradient><linearGradient id="w176" gradientUnits="userSpaceOnUse" x1="303.1" y1="413.7" x2="414.4" y2="299.1"><stop offset="0" stop-color="#ffffff"/><stop offset="1" stop-color="#aa9c00"/></linearGradient><linearGradient id="w177" gradientUnits="userSpaceOnUse" x1="303.1" y1="413.7" x2="414.4" y2="299.1"><stop offset="0" stop-color="#ffffff"/><stop offset="1" stop-color="#aa9b00"/></linearGradient><linearGradient id="w178" gradientUnits="userSpaceOnUse" x1="303.1" y1="413.7" x2="414.4" y2="299.2"><stop offset="0" stop-color="#ffffff"/><stop offset="1" stop-color="#ab9b00"/></linearGradient><linearGradient id="w179" gradientUnits="userSpaceOnUse" x1="303.1" y1="413.7" x2="414.4" y2="299.2"><stop offset="0" stop-color="#ffffff"/><stop offset="1" stop-color="#ac9a00"/></linearGradient><linearGradient id="w180" gradientUnits="userSpaceOnUse" x1="303.1" y1="413.7" x2="414.4" y2="299.2"><stop offset="0" stop-color="#ffffff"/><stop offset="1" stop-color="#ad9900"/></linearGradient><linearGradient id="w181" gradientUnits="userSpaceOnUse" x1="303.1" y1="413.7" x2="414.4" y2="299.2"><stop offset="0" stop-color="#ffffff"/><stop offset="1" stop-color="#ad9900"/></linearGradient><linearGradient id="w182" gradientUnits="userSpaceOnUse" x1="303.1" y1="413.7" x2="414.4" y2="299.2"><stop offset="0" stop-color="#ffffff"/><stop offset="1" stop-color="#ae9800"/></linearGradient><linearGradient id="w183" gradientUnits="userSpaceOnUse" x1="303.1" y1="413.7" x2="414.4" y2="299.2"><stop offset="0" stop-color="#ffffff"/><stop offset="1" stop-color="#af9700"/></linearGradient><linearGradient id="w184" gradientUnits="userSpaceOnUse" x1="303.1" y1="413.7" x2="414.4" y2="299.1"><stop offset="0" stop-color="#ffffff"/><stop offset="1" stop-color="#b09700"/></linearGradient><linearGradient id="w185" gradientUnits="userSpaceOnUse" x1="303.1" y1="413.7" x2="414.4" y2="299.1"><stop offset="0" stop-color="#ffffff"/><stop offset="1" stop-color="#b09600"/></linearGradient><linearGradient id="w186" gradientUnits="userSpaceOnUse" x1="303.1" y1="413.7" x2="414.4" y2="299.1"><stop offset="0" stop-color="#ffffff"/><stop offset="1" stop-color="#b19500"/></linearGradient><linearGradient id="w187" gradientUnits="userSpaceOnUse" x1="303.1" y1="413.7" x2="414.3" y2="299.1"><stop offset="0" stop-color="#ffffff"/><stop offset="1" stop-color="#b29500"/></linearGradient><linearGradient id="w188" gradientUnits="userSpaceOnUse" x1="303.1" y1="413.7" x2="414.3" y2="299.1"><stop offset="0" stop-color="#ffffff"/><stop offset="1" stop-color="#b39400"/></linearGradient><linearGradient id="w189" gradientUnits="userSpaceOnUse" x1="303.1" y1="413.7" x2="414.3" y2="299.1"><stop offset="0" stop-color="#ffffff"/><stop offset="1" stop-color="#b49300"/></linearGradient><linearGradient id="w190" gradientUnits="userSpaceOnUse" x1="303.1" y1="413.7" x2="414.3" y2="299.1"><stop offset="0" stop-color="#ffffff"/><stop offset="1" stop-color="#b49300"/></linearGradient><linearGradient id="w191" gradientUnits="userSpaceOnUse" x1="303.1" y1="413.7" x2="414.3" y2="299.1"><stop offset="0" stop-color="#ffffff"/><stop offset="1" stop-color="#b59200"/></linearGradient><linearGradient id="w192" gradientUnits="userSpaceOnUse" x1="303.1" y1="413.7" x2="414.3" y2="299.1"><stop offset="0" stop-color="#ffffff"/><stop offset="1" stop-color="#b69100"/></linearGradient><linearGradient id="w193" gradientUnits="userSpaceOnUse" x1="303.1" y1="413.7" x2="414.3" y2="299.1"><stop offset="0" stop-color="#ffffff"/><stop offset="1" stop-color="#b79100"/></linearGradient><linearGradient id="w194" gradientUnits="userSpaceOnUse" x1="303.1" y1="413.7" x2="414.3" y2="299.1"><stop offset="0" stop-color="#ffffff"/><stop offset="1" stop-color="#b79000"/></linearGradient><linearGradient id="w195" gradientUnits="userSpaceOnUse" x1="303.1" y1="413.7" x2="414.3" y2="299.1"><stop offset="0" stop-color="#ffffff"/><stop offset="1" stop-color="#b88f00"/></linearGradient><linearGradient id="w196" gradientUnits="userSpaceOnUse" x1="303.1" y1="413.7" x2="414.3" y2="299.1"><stop offset="0" stop-color="#ffffff"/><stop offset="1" stop-color="#b98f00"/></linearGradient><linearGradient id="w197" gradientUnits="userSpaceOnUse" x1="303.1" y1="413.7" x2="414.2" y2="299.1"><stop offset="0" stop-color="#ffffff"/><stop offset="1" stop-color="#ba8e00"/></linearGradient><linearGradient id="w198" gradientUnits="userSpaceOnUse" x1="303.1" y1="413.7" x2="414.2" y2="299.1"><stop offset="0" stop-color="#ffffff"/><stop offset="1" stop-color="#bb8d00"/></linearGradient><linearGradient id="w199" gradientUnits="userSpaceOnUse" x1="303.1" y1="413.7" x2="414.2" y2="299.0"><stop offset="0" stop-color="#ffffff"/><stop offset="1" stop-color="#bb8c00"/></linearGradient><linearGradient id="w200" gradientUnits="userSpaceOnUse" x1="303.1" y1="413.7" x2="414.2" y2="299.0"><stop offset="0" stop-color="#ffffff"/><stop offset="1" stop-color="#bc8c00"/></linearGradient><linearGradient id="w201" gradientUnits="userSpaceOnUse" x1="303.1" y1="413.7" x2="414.2" y2="299.0"><stop offset="0" stop-color="#ffffff"/><stop offset="1" stop-color="#bd8b00"/></linearGradient><linearGradient id="w202" gradientUnits="userSpaceOnUse" x1="303.1" y1="413.7" x2="414.2" y2="299.0"><stop offset="0" stop-color="#ffffff"/><stop offset="1" stop-color="#be8a00"/></linearGradient><linearGradient id="w203" gradientUnits="userSpaceOnUse" x1="303.1" y1="413.7" x2="414.2" y2="299.0"><stop offset="0" stop-color="#ffffff"/><stop offset="1" stop-color="#bf8a00"/></linearGradient><linearGradient id="w204" gradientUnits="userSpaceOnUse" x1="303.1" y1="413.7" x2="414.2" y2="299.0"><stop offset="0" stop-color="#ffffff"/><stop offset="1" stop-color="#c08900"/></linearGradient><linearGradient id="w205" gradientUnits="userSpaceOnUse" x1="303.1" y1="413.7" x2="414.2" y2="299.0"><stop offset="0" stop-color="#ffffff"/><stop offset="1" stop-color="#c08800"/></linearGradient><linearGradient id="w206" gradientUnits="userSpaceOnUse" x1="303.1" y1="413.7" x2="414.2" y2="299.0"><stop offset="0" stop-color="#ffffff"/><stop offset="1" stop-color="#c18700"/></linearGradient><linearGradient id="w207" gradientUnits="userSpaceOnUse" x1="303.1" y1="413.7" x2="414.2" y2="299.0"><stop offset="0" stop-color="#ffffff"/><stop offset="1" stop-color="#c28700"/></linearGradient><linearGradient id="w208" gradientUnits="userSpaceOnUse" x1="303.1" y1="413.7" x2="414.2" y2="299.0"><stop offset="0" stop-color="#ffffff"/><stop offset="1" stop-color="#c38600"/></linearGradient><linearGradient id="w209" gradientUnits="userSpaceOnUse" x1="303.1" y1="413.7" x2="414.2" y2="299.0"><stop offset="0" stop-color="#ffffff"/><stop offset="1" stop-color="#c48500"/></linearGradient><linearGradient id="w210" gradientUnits="userSpaceOnUse" x1="303.1" y1="413.7" x2="414.2" y2="299.0"><stop offset="0" stop-color="#ffffff"/><stop offset="1" stop-color="#c58400"/></linearGradient><linearGradient id="w211" gradientUnits="userSpaceOnUse" x1="303.1" y1="413.7" x2="414.3" y2="299.1"><stop offset="0" stop-color="#ffffff"/><stop offset="1" stop-color="#c68300"/></linearGradient><linearGradient id="w212" gradientUnits="userSpaceOnUse" x1="303.1" y1="413.7" x2="414.3" y2="299.1"><stop offset="0" stop-color="#ffffff"/><stop offset="1" stop-color="#c78300"/></linearGradient><linearGradient id="w213" gradientUnits="userSpaceOnUse" x1="303.1" y1="413.7" x2="414.4" y2="299.1"><stop offset="0" stop-color="#ffffff"/><stop offset="1" stop-color="#c78200"/></linearGradient><linearGradient id="w214" gradientUnits="userSpaceOnUse" x1="303.1" y1="413.7" x2="414.4" y2="299.1"><stop offset="0" stop-color="#ffffff"/><stop offset="1" stop-color="#c88100"/></linearGradient><linearGradient id="w215" gradientUnits="userSpaceOnUse" x1="303.1" y1="413.7" x2="414.5" y2="299.1"><stop offset="0" stop-color="#ffffff"/><stop offset="1" stop-color="#c98000"/></linearGradient><linearGradient id="w216" gradientUnits="userSpaceOnUse" x1="303.1" y1="413.7" x2="414.5" y2="299.1"><stop offset="0" stop-color="#ffffff"/><stop offset="1" stop-color="#ca7f00"/></linearGradient><linearGradient id="w217" gradientUnits="userSpaceOnUse" x1="303.1" y1="413.7" x2="414.5" y2="299.1"><stop offset="0" stop-color="#ffffff"/><stop offset="1" stop-color="#cb7e00"/></linearGradient><linearGradient id="w218" gradientUnits="userSpaceOnUse" x1="303.1" y1="413.7" x2="414.6" y2="299.2"><stop offset="0" stop-color="#ffffff"/><stop offset="1" stop-color="#cc7e00"/></linearGradient><linearGradient id="w219" gradientUnits="userSpaceOnUse" x1="303.1" y1="413.7" x2="414.6" y2="299.2"><stop offset="0" stop-color="#ffffff"/><stop offset="1" stop-color="#cd7d00"/></linearGradient><linearGradient id="w220" gradientUnits="userSpaceOnUse" x1="303.1" y1="413.7" x2="414.6" y2="299.2"><stop offset="0" stop-color="#ffffff"/><stop offset="1" stop-color="#ce7c00"/></linearGradient><linearGradient id="w221" gradientUnits="userSpaceOnUse" x1="303.1" y1="413.7" x2="414.6" y2="299.1"><stop offset="0" stop-color="#ffffff"/><stop offset="1" stop-color="#cf7b00"/></linearGradient><linearGradient id="w222" gradientUnits="userSpaceOnUse" x1="303.1" y1="413.7" x2="414.5" y2="299.1"><stop offset="0" stop-color="#ffffff"/><stop offset="1" stop-color="#d07a00"/></linearGradient><linearGradient id="w223" gradientUnits="userSpaceOnUse" x1="303.1" y1="413.7" x2="414.4" y2="299.1"><stop offset="0" stop-color="#ffffff"/><stop offset="1" stop-color="#d17900"/></linearGradient><linearGradient id="w224" gradientUnits="userSpaceOnUse" x1="303.1" y1="413.7" x2="414.4" y2="299.1"><stop offset="0" stop-color="#ffffff"/><stop offset="1" stop-color="#d37800"/></linearGradient><linearGradient id="w225" gradientUnits="userSpaceOnUse" x1="303.1" y1="413.7" x2="414.3" y2="299.1"><stop offset="0" stop-color="#ffffff"/><stop offset="1" stop-color="#d47700"/></linearGradient><linearGradient id="w226" gradientUnits="userSpaceOnUse" x1="303.1" y1="413.7" x2="414.3" y2="299.1"><stop offset="0" stop-color="#ffffff"/><stop offset="1" stop-color="#d57600"/></linearGradient><linearGradient id="w227" gradientUnits="userSpaceOnUse" x1="303.1" y1="413.7" x2="414.3" y2="299.1"><stop offset="0" stop-color="#ffffff"/><stop offset="1" stop-color="#d67500"/></linearGradient><linearGradient id="w228" gradientUnits="userSpaceOnUse" x1="303.1" y1="413.7" x2="414.2" y2="299.1"><stop offset="0" stop-color="#ffffff"/><stop offset="1" stop-color="#d77400"/></linearGradient><linearGradient id="w229" gradientUnits="userSpaceOnUse" x1="303.1" y1="413.7" x2="414.2" y2="299.1"><stop offset="0" stop-color="#ffffff"/><stop offset="1" stop-color="#d87300"/></linearGradient><linearGradient id="w230" gradientUnits="userSpaceOnUse" x1="303.1" y1="413.7" x2="414.3" y2="299.1"><stop offset="0" stop-color="#ffffff"/><stop offset="1" stop-color="#da7200"/></linearGradient><linearGradient id="w231" gradientUnits="userSpaceOnUse" x1="303.1" y1="413.7" x2="414.3" y2="299.1"><stop offset="0" stop-color="#ffffff"/><stop offset="1" stop-color="#db7100"/></linearGradient><linearGradient id="w232" gradientUnits="userSpaceOnUse" x1="303.1" y1="413.7" x2="414.3" y2="299.1"><stop offset="0" stop-color="#ffffff"/><stop offset="1" stop-color="#dc7000"/></linearGradient><linearGradient id="w233" gradientUnits="userSpaceOnUse" x1="303.1" y1="413.7" x2="414.3" y2="299.1"><stop offset="0" stop-color="#ffffff"/><stop offset="1" stop-color="#dd6f00"/></linearGradient><linearGradient id="w234" gradientUnits="userSpaceOnUse" x1="303.1" y1="413.7" x2="414.2" y2="299.1"><stop offset="0" stop-color="#ffffff"/><stop offset="1" stop-color="#df6d00"/></linearGradient><linearGradient id="w235" gradientUnits="userSpaceOnUse" x1="303.1" y1="413.7" x2="414.1" y2="299.1"><stop offset="0" stop-color="#ffffff"/><stop offset="1" stop-color="#e06c00"/></linearGradient><linearGradient id="w236" gradientUnits="userSpaceOnUse" x1="303.1" y1="413.7" x2="414.0" y2="299.1"><stop offset="0" stop-color="#ffffff"/><stop offset="1" stop-color="#e26b00"/></linearGradient><linearGradient id="w237" gradientUnits="userSpaceOnUse" x1="303.1" y1="413.7" x2="413.8" y2="299.1"><stop offset="0" stop-color="#ffffff"/><stop offset="1" stop-color="#e36a00"/></linearGradient><linearGradient id="w238" gradientUnits="userSpaceOnUse" x1="303.1" y1="413.7" x2="413.8" y2="299.1"><stop offset="0" stop-color="#ffffff"/><stop offset="1" stop-color="#e46800"/></linearGradient><linearGradient id="w239" gradientUnits="userSpaceOnUse" x1="303.1" y1="413.7" x2="413.8" y2="299.1"><stop offset="0" stop-color="#ffffff"/><stop offset="1" stop-color="#e66700"/></linearGradient><linearGradient id="w240" gradientUnits="userSpaceOnUse" x1="303.1" y1="413.7" x2="414.1" y2="299.1"><stop offset="0" stop-color="#ffffff"/><stop offset="1" stop-color="#e86600"/></linearGradient><linearGradient id="w241" gradientUnits="userSpaceOnUse" x1="303.1" y1="413.7" x2="414.4" y2="299.1"><stop offset="0" stop-color="#ffffff"/><stop offset="1" stop-color="#e96400"/></linearGradient><linearGradient id="w242" gradientUnits="userSpaceOnUse" x1="303.1" y1="413.7" x2="414.5" y2="299.1"><stop offset="0" stop-color="#ffffff"/><stop offset="1" stop-color="#eb6300"/></linearGradient><linearGradient id="w243" gradientUnits="userSpaceOnUse" x1="303.1" y1="413.7" x2="414.6" y2="299.0"><stop offset="0" stop-color="#ffffff"/><stop offset="1" stop-color="#ec6100"/></linearGradient><linearGradient id="w244" gradientUnits="userSpaceOnUse" x1="303.1" y1="413.7" x2="414.6" y2="299.0"><stop offset="0" stop-color="#ffffff"/><stop offset="1" stop-color="#ee6000"/></linearGradient><linearGradient id="w245" gradientUnits="userSpaceOnUse" x1="303.1" y1="413.7" x2="414.4" y2="299.1"><stop offset="0" stop-color="#ffffff"/><stop offset="1" stop-color="#f05e00"/></linearGradient><linearGradient id="w246" gradientUnits="userSpaceOnUse" x1="303.1" y1="413.7" x2="413.9" y2="299.1"><stop offset="0" stop-color="#ffffff"/><stop offset="1" stop-color="#f25d00"/></linearGradient><linearGradient id="w247" gradientUnits="userSpaceOnUse" x1="303.1" y1="413.7" x2="414.1" y2="299.1"><stop offset="0" stop-color="#ffffff"/><stop offset="1" stop-color="#f45b00"/></linearGradient><linearGradient id="w248" gradientUnits="userSpaceOnUse" x1="303.1" y1="413.7" x2="414.4" y2="299.1"><stop offset="0" stop-color="#ffffff"/><stop offset="1" stop-color="#f65900"/></linearGradient><linearGradient id="w249" gradientUnits="userSpaceOnUse" x1="303.1" y1="413.7" x2="414.6" y2="299.0"><stop offset="0" stop-color="#ffffff"/><stop offset="1" stop-color="#f85800"/></linearGradient><linearGradient id="w250" gradientUnits="userSpaceOnUse" x1="303.1" y1="413.7" x2="414.5" y2="299.0"><stop offset="0" stop-color="#ffffff"/><stop offset="1" stop-color="#fa5600"/></linearGradient><linearGradient id="w251" gradientUnits="userSpaceOnUse" x1="303.1" y1="413.7" x2="414.4" y2="299.1"><stop offset="0" stop-color="#ffffff"/><stop offset="1" stop-color="#fc5400"/></linearGradient><linearGradient id="w252" gradientUnits="userSpaceOnUse" x1="303.1" y1="413.7" x2="416.1" y2="298.8"><stop offset="0" stop-color="#ffffff"/><stop offset="1" stop-color="#fe5200"/></linearGradient><linearGradient id="w253" gradientUnits="userSpaceOnUse" x1="303.1" y1="413.7" x2="468.4" y2="574.8"><stop offset="0" stop-color="#ffffff"/><stop offset="1" stop-color="#ff5100"/></linearGradient><linearGradient id="w254" gradientUnits="userSpaceOnUse" x1="303.1" y1="413.7" x2="368.0" y2="557.0"><stop offset="0" stop-color="#ffffff"/><stop offset="1" stop-color="#fd5003"/></linearGradient><linearGradient id="w255" gradientUnits="userSpaceOnUse" x1="303.1" y1="413.7" x2="368.0" y2="557.0"><stop offset="0" stop-color="#ffffff"/><stop offset="1" stop-color="#fa4f06"/></linearGradient><linearGradient id="w256" gradientUnits="userSpaceOnUse" x1="303.1" y1="413.7" x2="368.0" y2="557.0"><stop offset="0" stop-color="#ffffff"/><stop offset="1" stop-color="#f74e0a"/></linearGradient><linearGradient id="w257" gradientUnits="userSpaceOnUse" x1="303.1" y1="413.7" x2="368.0" y2="557.0"><stop offset="0" stop-color="#ffffff"/><stop offset="1" stop-color="#f54d0e"/></linearGradient><linearGradient id="w258" gradientUnits="userSpaceOnUse" x1="303.1" y1="413.7" x2="368.0" y2="557.0"><stop offset="0" stop-color="#ffffff"/><stop offset="1" stop-color="#f24c11"/></linearGradient><linearGradient id="w259" gradientUnits="userSpaceOnUse" x1="303.1" y1="413.7" x2="368.0" y2="557.0"><stop offset="0" stop-color="#ffffff"/><stop offset="1" stop-color="#ef4b14"/></linearGradient><linearGradient id="w260" gradientUnits="userSpaceOnUse" x1="303.1" y1="413.7" x2="368.0" y2="557.0"><stop offset="0" stop-color="#ffffff"/><stop offset="1" stop-color="#ed4a17"/></linearGradient><linearGradient id="w261" gradientUnits="userSpaceOnUse" x1="303.1" y1="413.7" x2="368.0" y2="557.0"><stop offset="0" stop-color="#ffffff"/><stop offset="1" stop-color="#eb491a"/></linearGradient><linearGradient id="w262" gradientUnits="userSpaceOnUse" x1="303.1" y1="413.7" x2="368.0" y2="557.0"><stop offset="0" stop-color="#ffffff"/><stop offset="1" stop-color="#e8481d"/></linearGradient><linearGradient id="w263" gradientUnits="userSpaceOnUse" x1="303.1" y1="413.7" x2="368.0" y2="557.0"><stop offset="0" stop-color="#ffffff"/><stop offset="1" stop-color="#e64720"/></linearGradient><linearGradient id="w264" gradientUnits="userSpaceOnUse" x1="303.1" y1="413.7" x2="368.0" y2="557.0"><stop offset="0" stop-color="#ffffff"/><stop offset="1" stop-color="#e44623"/></linearGradient><linearGradient id="w265" gradientUnits="userSpaceOnUse" x1="303.1" y1="413.7" x2="368.0" y2="557.0"><stop offset="0" stop-color="#ffffff"/><stop offset="1" stop-color="#e24526"/></linearGradient><linearGradient id="w266" gradientUnits="userSpaceOnUse" x1="303.1" y1="413.7" x2="368.0" y2="557.0"><stop offset="0" stop-color="#ffffff"/><stop offset="1" stop-color="#e04428"/></linearGradient><linearGradient id="w267" gradientUnits="userSpaceOnUse" x1="303.1" y1="413.7" x2="368.0" y2="557.0"><stop offset="0" stop-color="#ffffff"/><stop offset="1" stop-color="#de442b"/></linearGradient><linearGradient id="w268" gradientUnits="userSpaceOnUse" x1="303.1" y1="413.7" x2="368.0" y2="557.0"><stop offset="0" stop-color="#ffffff"/><stop offset="1" stop-color="#dc432d"/></linearGradient><linearGradient id="w269" gradientUnits="userSpaceOnUse" x1="303.1" y1="413.7" x2="368.0" y2="557.0"><stop offset="0" stop-color="#ffffff"/><stop offset="1" stop-color="#da4230"/></linearGradient><linearGradient id="w270" gradientUnits="userSpaceOnUse" x1="303.1" y1="413.7" x2="368.0" y2="557.0"><stop offset="0" stop-color="#ffffff"/><stop offset="1" stop-color="#d84132"/></linearGradient><linearGradient id="w271" gradientUnits="userSpaceOnUse" x1="303.1" y1="413.7" x2="368.0" y2="557.0"><stop offset="0" stop-color="#ffffff"/><stop offset="1" stop-color="#d74134"/></linearGradient><linearGradient id="w272" gradientUnits="userSpaceOnUse" x1="303.1" y1="413.7" x2="368.0" y2="557.0"><stop offset="0" stop-color="#ffffff"/><stop offset="1" stop-color="#d54037"/></linearGradient><linearGradient id="w273" gradientUnits="userSpaceOnUse" x1="303.1" y1="413.7" x2="368.0" y2="557.0"><stop offset="0" stop-color="#ffffff"/><stop offset="1" stop-color="#d33f39"/></linearGradient><linearGradient id="w274" gradientUnits="userSpaceOnUse" x1="303.1" y1="413.7" x2="368.0" y2="557.0"><stop offset="0" stop-color="#ffffff"/><stop offset="1" stop-color="#d23f3b"/></linearGradient><linearGradient id="w275" gradientUnits="userSpaceOnUse" x1="303.1" y1="413.7" x2="368.0" y2="557.0"><stop offset="0" stop-color="#ffffff"/><stop offset="1" stop-color="#d03e3d"/></linearGradient><linearGradient id="w276" gradientUnits="userSpaceOnUse" x1="303.1" y1="413.7" x2="368.0" y2="557.0"><stop offset="0" stop-color="#ffffff"/><stop offset="1" stop-color="#ce3d3f"/></linearGradient><linearGradient id="w277" gradientUnits="userSpaceOnUse" x1="303.1" y1="413.7" x2="368.0" y2="557.0"><stop offset="0" stop-color="#ffffff"/><stop offset="1" stop-color="#cd3d41"/></linearGradient><linearGradient id="w278" gradientUnits="userSpaceOnUse" x1="303.1" y1="413.7" x2="368.0" y2="557.0"><stop offset="0" stop-color="#ffffff"/><stop offset="1" stop-color="#cb3c43"/></linearGradient><linearGradient id="w279" gradientUnits="userSpaceOnUse" x1="303.1" y1="413.7" x2="368.0" y2="557.0"><stop offset="0" stop-color="#ffffff"/><stop offset="1" stop-color="#ca3b45"/></linearGradient><linearGradient id="w280" gradientUnits="userSpaceOnUse" x1="303.1" y1="413.7" x2="368.0" y2="557.0"><stop offset="0" stop-color="#ffffff"/><stop offset="1" stop-color="#c83b47"/></linearGradient><linearGradient id="w281" gradientUnits="userSpaceOnUse" x1="303.1" y1="413.7" x2="368.0" y2="557.0"><stop offset="0" stop-color="#ffffff"/><stop offset="1" stop-color="#c73a49"/></linearGradient><linearGradient id="w282" gradientUnits="userSpaceOnUse" x1="303.1" y1="413.7" x2="368.0" y2="557.0"><stop offset="0" stop-color="#ffffff"/><stop offset="1" stop-color="#c63a4b"/></linearGradient><linearGradient id="w283" gradientUnits="userSpaceOnUse" x1="303.1" y1="413.7" x2="368.0" y2="557.0"><stop offset="0" stop-color="#ffffff"/><stop offset="1" stop-color="#c4394c"/></linearGradient><linearGradient id="w284" gradientUnits="userSpaceOnUse" x1="303.1" y1="413.7" x2="368.0" y2="557.0"><stop offset="0" stop-color="#ffffff"/><stop offset="1" stop-color="#c3394e"/></linearGradient><linearGradient id="w285" gradientUnits="userSpaceOnUse" x1="303.1" y1="413.7" x2="368.0" y2="557.0"><stop offset="0" stop-color="#ffffff"/><stop offset="1" stop-color="#c23850"/></linearGradient><linearGradient id="w286" gradientUnits="userSpaceOnUse" x1="303.1" y1="413.7" x2="368.0" y2="557.0"><stop offset="0" stop-color="#ffffff"/><stop offset="1" stop-color="#c03752"/></linearGradient><linearGradient id="w287" gradientUnits="userSpaceOnUse" x1="303.1" y1="413.7" x2="368.0" y2="557.0"><stop offset="0" stop-color="#ffffff"/><stop offset="1" stop-color="#bf3753"/></linearGradient><linearGradient id="w288" gradientUnits="userSpaceOnUse" x1="303.1" y1="413.7" x2="368.0" y2="557.0"><stop offset="0" stop-color="#ffffff"/><stop offset="1" stop-color="#be3655"/></linearGradient><linearGradient id="w289" gradientUnits="userSpaceOnUse" x1="303.1" y1="413.7" x2="368.0" y2="557.0"><stop offset="0" stop-color="#ffffff"/><stop offset="1" stop-color="#bd3657"/></linearGradient><linearGradient id="w290" gradientUnits="userSpaceOnUse" x1="303.1" y1="413.7" x2="368.0" y2="557.0"><stop offset="0" stop-color="#ffffff"/><stop offset="1" stop-color="#bb3558"/></linearGradient><linearGradient id="w291" gradientUnits="userSpaceOnUse" x1="303.1" y1="413.7" x2="368.0" y2="557.0"><stop offset="0" stop-color="#ffffff"/><stop offset="1" stop-color="#ba355a"/></linearGradient><linearGradient id="w292" gradientUnits="userSpaceOnUse" x1="303.1" y1="413.7" x2="368.0" y2="557.0"><stop offset="0" stop-color="#ffffff"/><stop offset="1" stop-color="#b9345b"/></linearGradient><linearGradient id="w293" gradientUnits="userSpaceOnUse" x1="303.1" y1="413.7" x2="368.0" y2="557.0"><stop offset="0" stop-color="#ffffff"/><stop offset="1" stop-color="#b8345d"/></linearGradient><linearGradient id="w294" gradientUnits="userSpaceOnUse" x1="303.1" y1="413.7" x2="368.0" y2="557.0"><stop offset="0" stop-color="#ffffff"/><stop offset="1" stop-color="#b7335e"/></linearGradient><linearGradient id="w295" gradientUnits="userSpaceOnUse" x1="303.1" y1="413.7" x2="368.0" y2="557.0"><stop offset="0" stop-color="#ffffff"/><stop offset="1" stop-color="#b53360"/></linearGradient><linearGradient id="w296" gradientUnits="userSpaceOnUse" x1="303.1" y1="413.7" x2="368.0" y2="557.0"><stop offset="0" stop-color="#ffffff"/><stop offset="1" stop-color="#b43361"/></linearGradient><linearGradient id="w297" gradientUnits="userSpaceOnUse" x1="303.1" y1="413.7" x2="368.0" y2="557.0"><stop offset="0" stop-color="#ffffff"/><stop offset="1" stop-color="#b33263"/></linearGradient><linearGradient id="w298" gradientUnits="userSpaceOnUse" x1="303.1" y1="413.7" x2="368.0" y2="557.0"><stop offset="0" stop-color="#ffffff"/><stop offset="1" stop-color="#b23264"/></linearGradient><linearGradient id="w299" gradientUnits="userSpaceOnUse" x1="303.1" y1="413.7" x2="368.0" y2="557.0"><stop offset="0" stop-color="#ffffff"/><stop offset="1" stop-color="#b13166"/></linearGradient><linearGradient id="w300" gradientUnits="userSpaceOnUse" x1="303.1" y1="413.7" x2="368.0" y2="557.0"><stop offset="0" stop-color="#ffffff"/><stop offset="1" stop-color="#b03167"/></linearGradient><linearGradient id="w301" gradientUnits="userSpaceOnUse" x1="303.1" y1="413.7" x2="368.0" y2="557.0"><stop offset="0" stop-color="#ffffff"/><stop offset="1" stop-color="#af3068"/></linearGradient><linearGradient id="w302" gradientUnits="userSpaceOnUse" x1="303.1" y1="413.7" x2="368.0" y2="557.0"><stop offset="0" stop-color="#ffffff"/><stop offset="1" stop-color="#ae306a"/></linearGradient><linearGradient id="w303" gradientUnits="userSpaceOnUse" x1="303.1" y1="413.7" x2="368.0" y2="557.0"><stop offset="0" stop-color="#ffffff"/><stop offset="1" stop-color="#ad2f6b"/></linearGradient><linearGradient id="w304" gradientUnits="userSpaceOnUse" x1="303.1" y1="413.7" x2="368.0" y2="557.0"><stop offset="0" stop-color="#ffffff"/><stop offset="1" stop-color="#ac2f6d"/></linearGradient><linearGradient id="w305" gradientUnits="userSpaceOnUse" x1="303.1" y1="413.7" x2="368.0" y2="557.0"><stop offset="0" stop-color="#ffffff"/><stop offset="1" stop-color="#ab2f6e"/></linearGradient><linearGradient id="w306" gradientUnits="userSpaceOnUse" x1="303.1" y1="413.7" x2="368.0" y2="557.0"><stop offset="0" stop-color="#ffffff"/><stop offset="1" stop-color="#aa2e6f"/></linearGradient><linearGradient id="w307" gradientUnits="userSpaceOnUse" x1="303.1" y1="413.7" x2="368.0" y2="557.0"><stop offset="0" stop-color="#ffffff"/><stop offset="1" stop-color="#a92e71"/></linearGradient><linearGradient id="w308" gradientUnits="userSpaceOnUse" x1="303.1" y1="413.7" x2="368.0" y2="557.0"><stop offset="0" stop-color="#ffffff"/><stop offset="1" stop-color="#a82d72"/></linearGradient><linearGradient id="w309" gradientUnits="userSpaceOnUse" x1="303.1" y1="413.7" x2="368.0" y2="557.0"><stop offset="0" stop-color="#ffffff"/><stop offset="1" stop-color="#a72d73"/></linearGradient><linearGradient id="w310" gradientUnits="userSpaceOnUse" x1="303.1" y1="413.7" x2="368.0" y2="557.0"><stop offset="0" stop-color="#ffffff"/><stop offset="1" stop-color="#a62d75"/></linearGradient><linearGradient id="w311" gradientUnits="userSpaceOnUse" x1="303.1" y1="413.7" x2="368.0" y2="557.0"><stop offset="0" stop-color="#ffffff"/><stop offset="1" stop-color="#a52c76"/></linearGradient><linearGradient id="w312" gradientUnits="userSpaceOnUse" x1="303.1" y1="413.7" x2="368.0" y2="557.0"><stop offset="0" stop-color="#ffffff"/><stop offset="1" stop-color="#a42c77"/></linearGradient><linearGradient id="w313" gradientUnits="userSpaceOnUse" x1="303.1" y1="413.7" x2="368.0" y2="557.0"><stop offset="0" stop-color="#ffffff"/><stop offset="1" stop-color="#a32b78"/></linearGradient><linearGradient id="w314" gradientUnits="userSpaceOnUse" x1="303.1" y1="413.7" x2="368.0" y2="557.0"><stop offset="0" stop-color="#ffffff"/><stop offset="1" stop-color="#a22b7a"/></linearGradient><linearGradient id="w315" gradientUnits="userSpaceOnUse" x1="303.1" y1="413.7" x2="368.0" y2="557.0"><stop offset="0" stop-color="#ffffff"/><stop offset="1" stop-color="#a12b7b"/></linearGradient><linearGradient id="w316" gradientUnits="userSpaceOnUse" x1="303.1" y1="413.7" x2="368.0" y2="557.0"><stop offset="0" stop-color="#ffffff"/><stop offset="1" stop-color="#a02a7c"/></linearGradient><linearGradient id="w317" gradientUnits="userSpaceOnUse" x1="303.1" y1="413.7" x2="368.0" y2="557.0"><stop offset="0" stop-color="#ffffff"/><stop offset="1" stop-color="#9f2a7d"/></linearGradient><linearGradient id="w318" gradientUnits="userSpaceOnUse" x1="303.1" y1="413.7" x2="368.0" y2="557.0"><stop offset="0" stop-color="#ffffff"/><stop offset="1" stop-color="#9e297f"/></linearGradient><linearGradient id="w319" gradientUnits="userSpaceOnUse" x1="303.1" y1="413.7" x2="368.0" y2="557.0"><stop offset="0" stop-color="#ffffff"/><stop offset="1" stop-color="#9d2980"/></linearGradient><linearGradient id="w320" gradientUnits="userSpaceOnUse" x1="303.1" y1="413.7" x2="368.0" y2="557.0"><stop offset="0" stop-color="#ffffff"/><stop offset="1" stop-color="#9c2981"/></linearGradient><linearGradient id="w321" gradientUnits="userSpaceOnUse" x1="303.1" y1="413.7" x2="368.0" y2="557.0"><stop offset="0" stop-color="#ffffff"/><stop offset="1" stop-color="#9b2882"/></linearGradient><linearGradient id="w322" gradientUnits="userSpaceOnUse" x1="303.1" y1="413.7" x2="368.0" y2="557.0"><stop offset="0" stop-color="#ffffff"/><stop offset="1" stop-color="#9a2884"/></linearGradient><linearGradient id="w323" gradientUnits="userSpaceOnUse" x1="303.1" y1="413.7" x2="368.0" y2="557.0"><stop offset="0" stop-color="#ffffff"/><stop offset="1" stop-color="#992785"/></linearGradient><linearGradient id="w324" gradientUnits="userSpaceOnUse" x1="303.1" y1="413.7" x2="368.0" y2="557.0"><stop offset="0" stop-color="#ffffff"/><stop offset="1" stop-color="#982786"/></linearGradient><linearGradient id="w325" gradientUnits="userSpaceOnUse" x1="303.1" y1="413.7" x2="368.0" y2="557.0"><stop offset="0" stop-color="#ffffff"/><stop offset="1" stop-color="#972787"/></linearGradient><linearGradient id="w326" gradientUnits="userSpaceOnUse" x1="303.1" y1="413.7" x2="368.0" y2="557.0"><stop offset="0" stop-color="#ffffff"/><stop offset="1" stop-color="#962689"/></linearGradient><linearGradient id="w327" gradientUnits="userSpaceOnUse" x1="303.1" y1="413.7" x2="368.0" y2="557.0"><stop offset="0" stop-color="#ffffff"/><stop offset="1" stop-color="#95268a"/></linearGradient><linearGradient id="w328" gradientUnits="userSpaceOnUse" x1="303.1" y1="413.7" x2="368.0" y2="557.0"><stop offset="0" stop-color="#ffffff"/><stop offset="1" stop-color="#94258b"/></linearGradient><linearGradient id="w329" gradientUnits="userSpaceOnUse" x1="303.1" y1="413.7" x2="368.0" y2="557.0"><stop offset="0" stop-color="#ffffff"/><stop offset="1" stop-color="#93258c"/></linearGradient><linearGradient id="w330" gradientUnits="userSpaceOnUse" x1="303.1" y1="413.7" x2="368.0" y2="557.0"><stop offset="0" stop-color="#ffffff"/><stop offset="1" stop-color="#92258d"/></linearGradient><linearGradient id="w331" gradientUnits="userSpaceOnUse" x1="303.1" y1="413.7" x2="368.0" y2="557.0"><stop offset="0" stop-color="#ffffff"/><stop offset="1" stop-color="#91248f"/></linearGradient><linearGradient id="w332" gradientUnits="userSpaceOnUse" x1="303.1" y1="413.7" x2="368.0" y2="557.0"><stop offset="0" stop-color="#ffffff"/><stop offset="1" stop-color="#902490"/></linearGradient><linearGradient id="w333" gradientUnits="userSpaceOnUse" x1="303.1" y1="413.7" x2="368.0" y2="557.0"><stop offset="0" stop-color="#ffffff"/><stop offset="1" stop-color="#902491"/></linearGradient><linearGradient id="w334" gradientUnits="userSpaceOnUse" x1="303.1" y1="413.7" x2="368.0" y2="557.0"><stop offset="0" stop-color="#ffffff"/><stop offset="1" stop-color="#8f2392"/></linearGradient><linearGradient id="w335" gradientUnits="userSpaceOnUse" x1="303.1" y1="413.7" x2="368.0" y2="557.0"><stop offset="0" stop-color="#ffffff"/><stop offset="1" stop-color="#8e2394"/></linearGradient><linearGradient id="w336" gradientUnits="userSpaceOnUse" x1="303.1" y1="413.7" x2="368.0" y2="557.0"><stop offset="0" stop-color="#ffffff"/><stop offset="1" stop-color="#8d2295"/></linearGradient><linearGradient id="w337" gradientUnits="userSpaceOnUse" x1="303.1" y1="413.7" x2="368.0" y2="557.0"><stop offset="0" stop-color="#ffffff"/><stop offset="1" stop-color="#8c2296"/></linearGradient><linearGradient id="w338" gradientUnits="userSpaceOnUse" x1="303.1" y1="413.7" x2="368.0" y2="557.0"><stop offset="0" stop-color="#ffffff"/><stop offset="1" stop-color="#8b2297"/></linearGradient><linearGradient id="w339" gradientUnits="userSpaceOnUse" x1="303.1" y1="413.7" x2="368.0" y2="557.0"><stop offset="0" stop-color="#ffffff"/><stop offset="1" stop-color="#8a2199"/></linearGradient><linearGradient id="w340" gradientUnits="userSpaceOnUse" x1="303.1" y1="413.7" x2="368.0" y2="557.0"><stop offset="0" stop-color="#ffffff"/><stop offset="1" stop-color="#89219a"/></linearGradient><linearGradient id="w341" gradientUnits="userSpaceOnUse" x1="303.1" y1="413.7" x2="368.0" y2="557.0"><stop offset="0" stop-color="#ffffff"/><stop offset="1" stop-color="#88209b"/></linearGradient><linearGradient id="w342" gradientUnits="userSpaceOnUse" x1="303.1" y1="413.7" x2="368.0" y2="557.0"><stop offset="0" stop-color="#ffffff"/><stop offset="1" stop-color="#87209c"/></linearGradient><linearGradient id="w343" gradientUnits="userSpaceOnUse" x1="303.1" y1="413.7" x2="368.0" y2="557.0"><stop offset="0" stop-color="#ffffff"/><stop offset="1" stop-color="#86209e"/></linearGradient><linearGradient id="w344" gradientUnits="userSpaceOnUse" x1="303.1" y1="413.7" x2="368.0" y2="557.0"><stop offset="0" stop-color="#ffffff"/><stop offset="1" stop-color="#851f9f"/></linearGradient><linearGradient id="w345" gradientUnits="userSpaceOnUse" x1="303.1" y1="413.7" x2="368.0" y2="557.0"><stop offset="0" stop-color="#ffffff"/><stop offset="1" stop-color="#841fa0"/></linearGradient><linearGradient id="w346" gradientUnits="userSpaceOnUse" x1="303.1" y1="413.7" x2="368.0" y2="557.0"><stop offset="0" stop-color="#ffffff"/><stop offset="1" stop-color="#831ea2"/></linearGradient><linearGradient id="w347" gradientUnits="userSpaceOnUse" x1="303.1" y1="413.7" x2="368.0" y2="557.0"><stop offset="0" stop-color="#ffffff"/><stop offset="1" stop-color="#821ea3"/></linearGradient><linearGradient id="w348" gradientUnits="userSpaceOnUse" x1="303.1" y1="413.7" x2="368.0" y2="557.0"><stop offset="0" stop-color="#ffffff"/><stop offset="1" stop-color="#811ea4"/></linearGradient><linearGradient id="w349" gradientUnits="userSpaceOnUse" x1="303.1" y1="413.7" x2="368.0" y2="557.0"><stop offset="0" stop-color="#ffffff"/><stop offset="1" stop-color="#801da5"/></linearGradient><linearGradient id="w350" gradientUnits="userSpaceOnUse" x1="303.1" y1="413.7" x2="368.0" y2="557.0"><stop offset="0" stop-color="#ffffff"/><stop offset="1" stop-color="#7f1da7"/></linearGradient><linearGradient id="w351" gradientUnits="userSpaceOnUse" x1="303.1" y1="413.7" x2="368.0" y2="557.0"><stop offset="0" stop-color="#ffffff"/><stop offset="1" stop-color="#7e1ca8"/></linearGradient><linearGradient id="w352" gradientUnits="userSpaceOnUse" x1="303.1" y1="413.7" x2="368.0" y2="557.0"><stop offset="0" stop-color="#ffffff"/><stop offset="1" stop-color="#7d1ca9"/></linearGradient><linearGradient id="w353" gradientUnits="userSpaceOnUse" x1="303.1" y1="413.7" x2="368.0" y2="557.0"><stop offset="0" stop-color="#ffffff"/><stop offset="1" stop-color="#7c1bab"/></linearGradient><linearGradient id="w354" gradientUnits="userSpaceOnUse" x1="303.1" y1="413.7" x2="368.0" y2="557.0"><stop offset="0" stop-color="#ffffff"/><stop offset="1" stop-color="#7b1bac"/></linearGradient><linearGradient id="w355" gradientUnits="userSpaceOnUse" x1="303.1" y1="413.7" x2="368.0" y2="557.0"><stop offset="0" stop-color="#ffffff"/><stop offset="1" stop-color="#7a1bae"/></linearGradient><linearGradient id="w356" gradientUnits="userSpaceOnUse" x1="303.1" y1="413.7" x2="368.0" y2="557.0"><stop offset="0" stop-color="#ffffff"/><stop offset="1" stop-color="#791aaf"/></linearGradient><linearGradient id="w357" gradientUnits="userSpaceOnUse" x1="303.1" y1="413.7" x2="368.0" y2="557.0"><stop offset="0" stop-color="#ffffff"/><stop offset="1" stop-color="#781ab0"/></linearGradient><linearGradient id="w358" gradientUnits="userSpaceOnUse" x1="303.1" y1="413.7" x2="368.0" y2="557.0"><stop offset="0" stop-color="#ffffff"/><stop offset="1" stop-color="#7619b2"/></linearGradient><linearGradient id="w359" gradientUnits="userSpaceOnUse" x1="303.1" y1="413.7" x2="368.0" y2="557.0"><stop offset="0" stop-color="#ffffff"/><stop offset="1" stop-color="#7519b3"/></linearGradient><linearGradient id="w360" gradientUnits="userSpaceOnUse" x1="303.1" y1="413.7" x2="368.0" y2="557.0"><stop offset="0" stop-color="#ffffff"/><stop offset="1" stop-color="#7418b5"/></linearGradient><linearGradient id="w361" gradientUnits="userSpaceOnUse" x1="303.1" y1="413.7" x2="368.0" y2="557.0"><stop offset="0" stop-color="#ffffff"/><stop offset="1" stop-color="#7318b6"/></linearGradient><linearGradient id="w362" gradientUnits="userSpaceOnUse" x1="303.1" y1="413.7" x2="368.0" y2="557.0"><stop offset="0" stop-color="#ffffff"/><stop offset="1" stop-color="#7217b8"/></linearGradient><linearGradient id="w363" gradientUnits="userSpaceOnUse" x1="303.1" y1="413.7" x2="368.0" y2="557.0"><stop offset="0" stop-color="#ffffff"/><stop offset="1" stop-color="#7117b9"/></linearGradient><linearGradient id="w364" gradientUnits="userSpaceOnUse" x1="303.1" y1="413.7" x2="368.0" y2="557.0"><stop offset="0" stop-color="#ffffff"/><stop offset="1" stop-color="#7016bb"/></linearGradient><linearGradient id="w365" gradientUnits="userSpaceOnUse" x1="303.1" y1="413.7" x2="368.0" y2="557.0"><stop offset="0" stop-color="#ffffff"/><stop offset="1" stop-color="#6e16bc"/></linearGradient><linearGradient id="w366" gradientUnits="userSpaceOnUse" x1="303.1" y1="413.7" x2="368.0" y2="557.0"><stop offset="0" stop-color="#ffffff"/><stop offset="1" stop-color="#6d15be"/></linearGradient><linearGradient id="w367" gradientUnits="userSpaceOnUse" x1="303.1" y1="413.7" x2="368.0" y2="557.0"><stop offset="0" stop-color="#ffffff"/><stop offset="1" stop-color="#6c15bf"/></linearGradient><linearGradient id="w368" gradientUnits="userSpaceOnUse" x1="303.1" y1="413.7" x2="368.0" y2="557.0"><stop offset="0" stop-color="#ffffff"/><stop offset="1" stop-color="#6b14c1"/></linearGradient><linearGradient id="w369" gradientUnits="userSpaceOnUse" x1="303.1" y1="413.7" x2="368.0" y2="557.0"><stop offset="0" stop-color="#ffffff"/><stop offset="1" stop-color="#6a14c3"/></linearGradient><linearGradient id="w370" gradientUnits="userSpaceOnUse" x1="303.1" y1="413.7" x2="368.0" y2="557.0"><stop offset="0" stop-color="#ffffff"/><stop offset="1" stop-color="#6813c4"/></linearGradient><linearGradient id="w371" gradientUnits="userSpaceOnUse" x1="303.1" y1="413.7" x2="368.0" y2="557.0"><stop offset="0" stop-color="#ffffff"/><stop offset="1" stop-color="#6713c6"/></linearGradient><linearGradient id="w372" gradientUnits="userSpaceOnUse" x1="303.1" y1="413.7" x2="368.0" y2="557.0"><stop offset="0" stop-color="#ffffff"/><stop offset="1" stop-color="#6612c8"/></linearGradient><linearGradient id="w373" gradientUnits="userSpaceOnUse" x1="303.1" y1="413.7" x2="368.0" y2="557.0"><stop offset="0" stop-color="#ffffff"/><stop offset="1" stop-color="#6412ca"/></linearGradient><linearGradient id="w374" gradientUnits="userSpaceOnUse" x1="303.1" y1="413.7" x2="368.0" y2="557.0"><stop offset="0" stop-color="#ffffff"/><stop offset="1" stop-color="#6311cb"/></linearGradient><linearGradient id="w375" gradientUnits="userSpaceOnUse" x1="303.1" y1="413.7" x2="368.0" y2="557.0"><stop offset="0" stop-color="#ffffff"/><stop offset="1" stop-color="#6111cd"/></linearGradient><linearGradient id="w376" gradientUnits="userSpaceOnUse" x1="303.1" y1="413.7" x2="368.0" y2="557.0"><stop offset="0" stop-color="#ffffff"/><stop offset="1" stop-color="#6010cf"/></linearGradient><linearGradient id="w377" gradientUnits="userSpaceOnUse" x1="303.1" y1="413.7" x2="368.0" y2="557.0"><stop offset="0" stop-color="#ffffff"/><stop offset="1" stop-color="#5f10d1"/></linearGradient><linearGradient id="w378" gradientUnits="userSpaceOnUse" x1="303.1" y1="413.7" x2="368.0" y2="557.0"><stop offset="0" stop-color="#ffffff"/><stop offset="1" stop-color="#5d0fd3"/></linearGradient><linearGradient id="w379" gradientUnits="userSpaceOnUse" x1="303.1" y1="413.7" x2="368.0" y2="557.0"><stop offset="0" stop-color="#ffffff"/><stop offset="1" stop-color="#5c0ed5"/></linearGradient><linearGradient id="w380" gradientUnits="userSpaceOnUse" x1="303.1" y1="413.7" x2="368.0" y2="557.0"><stop offset="0" stop-color="#ffffff"/><stop offset="1" stop-color="#5a0ed7"/></linearGradient><linearGradient id="w381" gradientUnits="userSpaceOnUse" x1="303.1" y1="413.7" x2="368.0" y2="557.0"><stop offset="0" stop-color="#ffffff"/><stop offset="1" stop-color="#590dd9"/></linearGradient><linearGradient id="w382" gradientUnits="userSpaceOnUse" x1="303.1" y1="413.7" x2="368.0" y2="557.0"><stop offset="0" stop-color="#ffffff"/><stop offset="1" stop-color="#570cdb"/></linearGradient><linearGradient id="w383" gradientUnits="userSpaceOnUse" x1="303.1" y1="413.7" x2="368.0" y2="557.0"><stop offset="0" stop-color="#ffffff"/><stop offset="1" stop-color="#550cdd"/></linearGradient><linearGradient id="w384" gradientUnits="userSpaceOnUse" x1="303.1" y1="413.7" x2="368.0" y2="557.0"><stop offset="0" stop-color="#ffffff"/><stop offset="1" stop-color="#540bdf"/></linearGradient><linearGradient id="w385" gradientUnits="userSpaceOnUse" x1="303.1" y1="413.7" x2="368.0" y2="557.0"><stop offset="0" stop-color="#ffffff"/><stop offset="1" stop-color="#520ae2"/></linearGradient><linearGradient id="w386" gradientUnits="userSpaceOnUse" x1="303.1" y1="413.7" x2="368.0" y2="557.0"><stop offset="0" stop-color="#ffffff"/><stop offset="1" stop-color="#500ae4"/></linearGradient><linearGradient id="w387" gradientUnits="userSpaceOnUse" x1="303.1" y1="413.7" x2="368.0" y2="557.0"><stop offset="0" stop-color="#ffffff"/><stop offset="1" stop-color="#4e09e6"/></linearGradient><linearGradient id="w388" gradientUnits="userSpaceOnUse" x1="303.1" y1="413.7" x2="368.0" y2="557.0"><stop offset="0" stop-color="#ffffff"/><stop offset="1" stop-color="#4c08e9"/></linearGradient><linearGradient id="w389" gradientUnits="userSpaceOnUse" x1="303.1" y1="413.7" x2="368.0" y2="557.0"><stop offset="0" stop-color="#ffffff"/><stop offset="1" stop-color="#4b07eb"/></linearGradient><linearGradient id="w390" gradientUnits="userSpaceOnUse" x1="303.1" y1="413.7" x2="368.0" y2="557.0"><stop offset="0" stop-color="#ffffff"/><stop offset="1" stop-color="#4906ee"/></linearGradient><linearGradient id="w391" gradientUnits="userSpaceOnUse" x1="303.1" y1="413.7" x2="368.0" y2="557.0"><stop offset="0" stop-color="#ffffff"/><stop offset="1" stop-color="#4706f0"/></linearGradient><linearGradient id="w392" gradientUnits="userSpaceOnUse" x1="303.1" y1="413.7" x2="368.0" y2="557.0"><stop offset="0" stop-color="#ffffff"/><stop offset="1" stop-color="#4405f3"/></linearGradient><linearGradient id="w393" gradientUnits="userSpaceOnUse" x1="303.1" y1="413.7" x2="368.0" y2="557.0"><stop offset="0" stop-color="#ffffff"/><stop offset="1" stop-color="#4204f6"/></linearGradient><linearGradient id="w394" gradientUnits="userSpaceOnUse" x1="303.1" y1="413.7" x2="368.0" y2="557.0"><stop offset="0" stop-color="#ffffff"/><stop offset="1" stop-color="#4003f9"/></linearGradient><linearGradient id="w395" gradientUnits="userSpaceOnUse" x1="303.1" y1="413.7" x2="368.0" y2="557.0"><stop offset="0" stop-color="#ffffff"/><stop offset="1" stop-color="#3e02fc"/></linearGradient><linearGradient id="w396" gradientUnits="userSpaceOnUse" x1="303.1" y1="413.7" x2="359.0" y2="580.3"><stop offset="0" stop-color="#ffffff"/><stop offset="1" stop-color="#3d02fd"/></linearGradient><linearGradient id="w397" gradientUnits="userSpaceOnUse" x1="303.1" y1="413.7" x2="244.3" y2="648.6"><stop offset="0" stop-color="#ffffff"/><stop offset="1" stop-color="#3c02fe"/></linearGradient><linearGradient id="w398" gradientUnits="userSpaceOnUse" x1="303.1" y1="413.7" x2="150.5" y2="603.0"><stop offset="0" stop-color="#ffffff"/><stop offset="1" stop-color="#3a02fe"/></linearGradient><linearGradient id="w399" gradientUnits="userSpaceOnUse" x1="303.1" y1="413.7" x2="143.2" y2="593.4"><stop offset="0" stop-color="#ffffff"/><stop offset="1" stop-color="#3903ff"/></linearGradient><linearGradient id="w400" gradientUnits="userSpaceOnUse" x1="303.1" y1="413.7" x2="146.0" y2="597.2"><stop offset="0" stop-color="#ffffff"/><stop offset="1" stop-color="#3804ff"/></linearGradient><linearGradient id="w401" gradientUnits="userSpaceOnUse" x1="303.1" y1="413.7" x2="146.4" y2="597.7"><stop offset="0" stop-color="#ffffff"/><stop offset="1" stop-color="#3705ff"/></linearGradient><linearGradient id="w402" gradientUnits="userSpaceOnUse" x1="303.1" y1="413.7" x2="145.0" y2="596.0"><stop offset="0" stop-color="#ffffff"/><stop offset="1" stop-color="#3506ff"/></linearGradient><linearGradient id="w403" gradientUnits="userSpaceOnUse" x1="303.1" y1="413.7" x2="141.1" y2="590.9"><stop offset="0" stop-color="#ffffff"/><stop offset="1" stop-color="#3407ff"/></linearGradient><linearGradient id="w404" gradientUnits="userSpaceOnUse" x1="303.1" y1="413.7" x2="136.2" y2="583.8"><stop offset="0" stop-color="#ffffff"/><stop offset="1" stop-color="#3308ff"/></linearGradient><linearGradient id="w405" gradientUnits="userSpaceOnUse" x1="303.1" y1="413.7" x2="131.5" y2="576.1"><stop offset="0" stop-color="#ffffff"/><stop offset="1" stop-color="#3209ff"/></linearGradient><linearGradient id="w406" gradientUnits="userSpaceOnUse" x1="303.1" y1="413.7" x2="126.8" y2="567.0"><stop offset="0" stop-color="#ffffff"/><stop offset="1" stop-color="#310aff"/></linearGradient><linearGradient id="w407" gradientUnits="userSpaceOnUse" x1="303.1" y1="413.7" x2="122.4" y2="556.6"><stop offset="0" stop-color="#ffffff"/><stop offset="1" stop-color="#300cff"/></linearGradient><linearGradient id="w408" gradientUnits="userSpaceOnUse" x1="303.1" y1="413.7" x2="118.9" y2="546.2"><stop offset="0" stop-color="#ffffff"/><stop offset="1" stop-color="#2f0dfe"/></linearGradient><linearGradient id="w409" gradientUnits="userSpaceOnUse" x1="303.1" y1="413.7" x2="116.9" y2="539.1"><stop offset="0" stop-color="#ffffff"/><stop offset="1" stop-color="#2e0efe"/></linearGradient><linearGradient id="w410" gradientUnits="userSpaceOnUse" x1="303.1" y1="413.7" x2="115.6" y2="533.2"><stop offset="0" stop-color="#ffffff"/><stop offset="1" stop-color="#2d0ffe"/></linearGradient><linearGradient id="w411" gradientUnits="userSpaceOnUse" x1="303.1" y1="413.7" x2="114.7" y2="527.9"><stop offset="0" stop-color="#ffffff"/><stop offset="1" stop-color="#2c11fd"/></linearGradient><linearGradient id="w412" gradientUnits="userSpaceOnUse" x1="303.1" y1="413.7" x2="113.9" y2="523.1"><stop offset="0" stop-color="#ffffff"/><stop offset="1" stop-color="#2b12fc"/></linearGradient><linearGradient id="w413" gradientUnits="userSpaceOnUse" x1="303.1" y1="413.7" x2="113.4" y2="518.8"><stop offset="0" stop-color="#ffffff"/><stop offset="1" stop-color="#2a13fc"/></linearGradient><linearGradient id="w414" gradientUnits="userSpaceOnUse" x1="303.1" y1="413.7" x2="113.0" y2="515.2"><stop offset="0" stop-color="#ffffff"/><stop offset="1" stop-color="#2915fb"/></linearGradient><linearGradient id="w415" gradientUnits="userSpaceOnUse" x1="303.1" y1="413.7" x2="112.7" y2="512.1"><stop offset="0" stop-color="#ffffff"/><stop offset="1" stop-color="#2916fb"/></linearGradient><linearGradient id="w416" gradientUnits="userSpaceOnUse" x1="303.1" y1="413.7" x2="112.4" y2="507.7"><stop offset="0" stop-color="#ffffff"/><stop offset="1" stop-color="#2817fa"/></linearGradient><linearGradient id="w417" gradientUnits="userSpaceOnUse" x1="303.1" y1="413.7" x2="112.2" y2="505.4"><stop offset="0" stop-color="#ffffff"/><stop offset="1" stop-color="#2719f9"/></linearGradient><linearGradient id="w418" gradientUnits="userSpaceOnUse" x1="303.1" y1="413.7" x2="112.1" y2="503.5"><stop offset="0" stop-color="#ffffff"/><stop offset="1" stop-color="#261af8"/></linearGradient><linearGradient id="w419" gradientUnits="userSpaceOnUse" x1="303.1" y1="413.7" x2="112.0" y2="499.4"><stop offset="0" stop-color="#ffffff"/><stop offset="1" stop-color="#261bf8"/></linearGradient><linearGradient id="w420" gradientUnits="userSpaceOnUse" x1="303.1" y1="413.7" x2="112.0" y2="498.5"><stop offset="0" stop-color="#ffffff"/><stop offset="1" stop-color="#251cf7"/></linearGradient><linearGradient id="w421" gradientUnits="userSpaceOnUse" x1="303.1" y1="413.7" x2="111.9" y2="495.3"><stop offset="0" stop-color="#ffffff"/><stop offset="1" stop-color="#241ef6"/></linearGradient><linearGradient id="w422" gradientUnits="userSpaceOnUse" x1="303.1" y1="413.7" x2="111.9" y2="494.5"><stop offset="0" stop-color="#ffffff"/><stop offset="1" stop-color="#241ff5"/></linearGradient><linearGradient id="w423" gradientUnits="userSpaceOnUse" x1="303.1" y1="413.7" x2="111.8" y2="492.0"><stop offset="0" stop-color="#ffffff"/><stop offset="1" stop-color="#2320f5"/></linearGradient><linearGradient id="w424" gradientUnits="userSpaceOnUse" x1="303.1" y1="413.7" x2="111.8" y2="491.7"><stop offset="0" stop-color="#ffffff"/><stop offset="1" stop-color="#2322f4"/></linearGradient><linearGradient id="w425" gradientUnits="userSpaceOnUse" x1="303.1" y1="413.7" x2="111.8" y2="489.3"><stop offset="0" stop-color="#ffffff"/><stop offset="1" stop-color="#2223f3"/></linearGradient><linearGradient id="w426" gradientUnits="userSpaceOnUse" x1="303.1" y1="413.7" x2="111.8" y2="489.2"><stop offset="0" stop-color="#ffffff"/><stop offset="1" stop-color="#2124f2"/></linearGradient><linearGradient id="w427" gradientUnits="userSpaceOnUse" x1="303.1" y1="413.7" x2="111.7" y2="487.4"><stop offset="0" stop-color="#ffffff"/><stop offset="1" stop-color="#2126f1"/></linearGradient><linearGradient id="w428" gradientUnits="userSpaceOnUse" x1="303.1" y1="413.7" x2="111.7" y2="486.9"><stop offset="0" stop-color="#ffffff"/><stop offset="1" stop-color="#2027f1"/></linearGradient><linearGradient id="w429" gradientUnits="userSpaceOnUse" x1="303.1" y1="413.7" x2="111.7" y2="486.5"><stop offset="0" stop-color="#ffffff"/><stop offset="1" stop-color="#2028f0"/></linearGradient><linearGradient id="w430" gradientUnits="userSpaceOnUse" x1="303.1" y1="413.7" x2="111.6" y2="484.9"><stop offset="0" stop-color="#ffffff"/><stop offset="1" stop-color="#1f29ef"/></linearGradient><linearGradient id="w431" gradientUnits="userSpaceOnUse" x1="303.1" y1="413.7" x2="111.6" y2="484.9"><stop offset="0" stop-color="#ffffff"/><stop offset="1" stop-color="#1f2bee"/></linearGradient><linearGradient id="w432" gradientUnits="userSpaceOnUse" x1="303.1" y1="413.7" x2="111.6" y2="484.1"><stop offset="0" stop-color="#ffffff"/><stop offset="1" stop-color="#1e2ced"/></linearGradient><linearGradient id="w433" gradientUnits="userSpaceOnUse" x1="303.1" y1="413.7" x2="111.5" y2="482.7"><stop offset="0" stop-color="#ffffff"/><stop offset="1" stop-color="#1e2ded"/></linearGradient><linearGradient id="w434" gradientUnits="userSpaceOnUse" x1="303.1" y1="413.7" x2="111.5" y2="482.7"><stop offset="0" stop-color="#ffffff"/><stop offset="1" stop-color="#1d2eec"/></linearGradient><linearGradient id="w435" gradientUnits="userSpaceOnUse" x1="303.1" y1="413.7" x2="111.5" y2="482.0"><stop offset="0" stop-color="#ffffff"/><stop offset="1" stop-color="#1d30eb"/></linearGradient><linearGradient id="w436" gradientUnits="userSpaceOnUse" x1="303.1" y1="413.7" x2="111.3" y2="480.0"><stop offset="0" stop-color="#ffffff"/><stop offset="1" stop-color="#1c31ea"/></linearGradient><linearGradient id="w437" gradientUnits="userSpaceOnUse" x1="303.1" y1="413.7" x2="111.3" y2="480.0"><stop offset="0" stop-color="#ffffff"/><stop offset="1" stop-color="#1c32e9"/></linearGradient><linearGradient id="w438" gradientUnits="userSpaceOnUse" x1="303.1" y1="413.7" x2="111.3" y2="480.0"><stop offset="0" stop-color="#ffffff"/><stop offset="1" stop-color="#1b33e9"/></linearGradient><linearGradient id="w439" gradientUnits="userSpaceOnUse" x1="303.1" y1="413.7" x2="111.1" y2="477.3"><stop offset="0" stop-color="#ffffff"/><stop offset="1" stop-color="#1b35e8"/></linearGradient><linearGradient id="w440" gradientUnits="userSpaceOnUse" x1="303.1" y1="413.7" x2="111.0" y2="476.8"><stop offset="0" stop-color="#ffffff"/><stop offset="1" stop-color="#1b36e7"/></linearGradient><linearGradient id="w441" gradientUnits="userSpaceOnUse" x1="303.1" y1="413.7" x2="111.0" y2="476.8"><stop offset="0" stop-color="#ffffff"/><stop offset="1" stop-color="#1a37e6"/></linearGradient><linearGradient id="w442" gradientUnits="userSpaceOnUse" x1="303.1" y1="413.7" x2="111.0" y2="476.4"><stop offset="0" stop-color="#ffffff"/><stop offset="1" stop-color="#1a38e5"/></linearGradient><linearGradient id="w443" gradientUnits="userSpaceOnUse" x1="303.1" y1="413.7" x2="110.6" y2="473.3"><stop offset="0" stop-color="#ffffff"/><stop offset="1" stop-color="#1939e4"/></linearGradient><linearGradient id="w444" gradientUnits="userSpaceOnUse" x1="303.1" y1="413.7" x2="110.6" y2="473.3"><stop offset="0" stop-color="#ffffff"/><stop offset="1" stop-color="#193be4"/></linearGradient><linearGradient id="w445" gradientUnits="userSpaceOnUse" x1="303.1" y1="413.7" x2="110.6" y2="473.3"><stop offset="0" stop-color="#ffffff"/><stop offset="1" stop-color="#183ce3"/></linearGradient><linearGradient id="w446" gradientUnits="userSpaceOnUse" x1="303.1" y1="413.7" x2="110.6" y2="473.0"><stop offset="0" stop-color="#ffffff"/><stop offset="1" stop-color="#183de2"/></linearGradient><linearGradient id="w447" gradientUnits="userSpaceOnUse" x1="303.1" y1="413.7" x2="110.2" y2="469.4"><stop offset="0" stop-color="#ffffff"/><stop offset="1" stop-color="#183ee1"/></linearGradient><linearGradient id="w448" gradientUnits="userSpaceOnUse" x1="303.1" y1="413.7" x2="110.2" y2="469.4"><stop offset="0" stop-color="#ffffff"/><stop offset="1" stop-color="#173fe0"/></linearGradient><linearGradient id="w449" gradientUnits="userSpaceOnUse" x1="303.1" y1="413.7" x2="110.2" y2="469.4"><stop offset="0" stop-color="#ffffff"/><stop offset="1" stop-color="#1740df"/></linearGradient><linearGradient id="w450" gradientUnits="userSpaceOnUse" x1="303.1" y1="413.7" x2="110.2" y2="469.4"><stop offset="0" stop-color="#ffffff"/><stop offset="1" stop-color="#1742de"/></linearGradient><linearGradient id="w451" gradientUnits="userSpaceOnUse" x1="303.1" y1="413.7" x2="109.8" y2="466.9"><stop offset="0" stop-color="#ffffff"/><stop offset="1" stop-color="#1643de"/></linearGradient><linearGradient id="w452" gradientUnits="userSpaceOnUse" x1="303.1" y1="413.7" x2="109.7" y2="465.9"><stop offset="0" stop-color="#ffffff"/><stop offset="1" stop-color="#1644dd"/></linearGradient><linearGradient id="w453" gradientUnits="userSpaceOnUse" x1="303.1" y1="413.7" x2="109.7" y2="465.9"><stop offset="0" stop-color="#ffffff"/><stop offset="1" stop-color="#1545dc"/></linearGradient><linearGradient id="w454" gradientUnits="userSpaceOnUse" x1="303.1" y1="413.7" x2="109.7" y2="465.9"><stop offset="0" stop-color="#ffffff"/><stop offset="1" stop-color="#1546db"/></linearGradient><linearGradient id="w455" gradientUnits="userSpaceOnUse" x1="303.1" y1="413.7" x2="109.6" y2="465.8"><stop offset="0" stop-color="#ffffff"/><stop offset="1" stop-color="#1547da"/></linearGradient><linearGradient id="w456" gradientUnits="userSpaceOnUse" x1="303.1" y1="413.7" x2="109.1" y2="462.8"><stop offset="0" stop-color="#ffffff"/><stop offset="1" stop-color="#1449d9"/></linearGradient><linearGradient id="w457" gradientUnits="userSpaceOnUse" x1="303.1" y1="413.7" x2="109.1" y2="462.8"><stop offset="0" stop-color="#ffffff"/><stop offset="1" stop-color="#144ad8"/></linearGradient><linearGradient id="w458" gradientUnits="userSpaceOnUse" x1="303.1" y1="413.7" x2="109.1" y2="462.8"><stop offset="0" stop-color="#ffffff"/><stop offset="1" stop-color="#144bd8"/></linearGradient><linearGradient id="w459" gradientUnits="userSpaceOnUse" x1="303.1" y1="413.7" x2="109.1" y2="462.8"><stop offset="0" stop-color="#ffffff"/><stop offset="1" stop-color="#134cd7"/></linearGradient><linearGradient id="w460" gradientUnits="userSpaceOnUse" x1="303.1" y1="413.7" x2="109.1" y2="462.7"><stop offset="0" stop-color="#ffffff"/><stop offset="1" stop-color="#134dd6"/></linearGradient><linearGradient id="w461" gradientUnits="userSpaceOnUse" x1="303.1" y1="413.7" x2="108.6" y2="460.2"><stop offset="0" stop-color="#ffffff"/><stop offset="1" stop-color="#134ed5"/></linearGradient><linearGradient id="w462" gradientUnits="userSpaceOnUse" x1="303.1" y1="413.7" x2="108.6" y2="460.2"><stop offset="0" stop-color="#ffffff"/><stop offset="1" stop-color="#1250d4"/></linearGradient><linearGradient id="w463" gradientUnits="userSpaceOnUse" x1="303.1" y1="413.7" x2="108.6" y2="460.2"><stop offset="0" stop-color="#ffffff"/><stop offset="1" stop-color="#1251d3"/></linearGradient><linearGradient id="w464" gradientUnits="userSpaceOnUse" x1="303.1" y1="413.7" x2="108.6" y2="460.2"><stop offset="0" stop-color="#ffffff"/><stop offset="1" stop-color="#1252d2"/></linearGradient><linearGradient id="w465" gradientUnits="userSpaceOnUse" x1="303.1" y1="413.7" x2="108.6" y2="460.2"><stop offset="0" stop-color="#ffffff"/><stop offset="1" stop-color="#1253d1"/></linearGradient><linearGradient id="w466" gradientUnits="userSpaceOnUse" x1="303.1" y1="413.7" x2="108.1" y2="458.4"><stop offset="0" stop-color="#ffffff"/><stop offset="1" stop-color="#1154d0"/></linearGradient><linearGradient id="w467" gradientUnits="userSpaceOnUse" x1="303.1" y1="413.7" x2="108.0" y2="458.0"><stop offset="0" stop-color="#ffffff"/><stop offset="1" stop-color="#1155d0"/></linearGradient><linearGradient id="w468" gradientUnits="userSpaceOnUse" x1="303.1" y1="413.7" x2="108.0" y2="458.0"><stop offset="0" stop-color="#ffffff"/><stop offset="1" stop-color="#1156cf"/></linearGradient><linearGradient id="w469" gradientUnits="userSpaceOnUse" x1="303.1" y1="413.7" x2="108.0" y2="458.0"><stop offset="0" stop-color="#ffffff"/><stop offset="1" stop-color="#1058ce"/></linearGradient><linearGradient id="w470" gradientUnits="userSpaceOnUse" x1="303.1" y1="413.7" x2="108.0" y2="458.0"><stop offset="0" stop-color="#ffffff"/><stop offset="1" stop-color="#1059cd"/></linearGradient><linearGradient id="w471" gradientUnits="userSpaceOnUse" x1="303.1" y1="413.7" x2="107.8" y2="457.4"><stop offset="0" stop-color="#ffffff"/><stop offset="1" stop-color="#105acc"/></linearGradient><linearGradient id="w472" gradientUnits="userSpaceOnUse" x1="303.1" y1="413.7" x2="107.4" y2="456.0"><stop offset="0" stop-color="#ffffff"/><stop offset="1" stop-color="#105bcb"/></linearGradient><linearGradient id="w473" gradientUnits="userSpaceOnUse" x1="303.1" y1="413.7" x2="107.4" y2="456.0"><stop offset="0" stop-color="#ffffff"/><stop offset="1" stop-color="#0f5cca"/></linearGradient><linearGradient id="w474" gradientUnits="userSpaceOnUse" x1="303.1" y1="413.7" x2="107.4" y2="456.0"><stop offset="0" stop-color="#ffffff"/><stop offset="1" stop-color="#0f5dc9"/></linearGradient><linearGradient id="w475" gradientUnits="userSpaceOnUse" x1="303.1" y1="413.7" x2="107.4" y2="456.0"><stop offset="0" stop-color="#ffffff"/><stop offset="1" stop-color="#0f5fc8"/></linearGradient><linearGradient id="w476" gradientUnits="userSpaceOnUse" x1="303.1" y1="413.7" x2="107.4" y2="456.0"><stop offset="0" stop-color="#ffffff"/><stop offset="1" stop-color="#0e60c7"/></linearGradient><linearGradient id="w477" gradientUnits="userSpaceOnUse" x1="303.1" y1="413.7" x2="106.9" y2="454.7"><stop offset="0" stop-color="#ffffff"/><stop offset="1" stop-color="#0e61c6"/></linearGradient><linearGradient id="w478" gradientUnits="userSpaceOnUse" x1="303.1" y1="413.7" x2="106.6" y2="453.8"><stop offset="0" stop-color="#ffffff"/><stop offset="1" stop-color="#0e62c5"/></linearGradient><linearGradient id="w479" gradientUnits="userSpaceOnUse" x1="303.1" y1="413.7" x2="106.6" y2="453.8"><stop offset="0" stop-color="#ffffff"/><stop offset="1" stop-color="#0e63c4"/></linearGradient><linearGradient id="w480" gradientUnits="userSpaceOnUse" x1="303.1" y1="413.7" x2="106.6" y2="453.8"><stop offset="0" stop-color="#ffffff"/><stop offset="1" stop-color="#0d65c3"/></linearGradient><linearGradient id="w481" gradientUnits="userSpaceOnUse" x1="303.1" y1="413.7" x2="106.6" y2="453.8"><stop offset="0" stop-color="#ffffff"/><stop offset="1" stop-color="#0d66c2"/></linearGradient>
</defs>
<rect width="733" height="686" fill="#b2b2b2"/>
<text x="5.5" y="11.5" font-size="11" fill="#000" stroke="#000" stroke-width=".15" textLength="63.5" lengthAdjust="spacingAndGlyphs">Chromaticity</text>
<g shape-rendering="crispEdges">
<rect x="0" y="25" width="716" height="661" fill="#d8d4cc"/>
<rect x="0" y="25" width="13" height="661" fill="url(#bl)"/>
<rect x="703" y="25" width="13" height="661" fill="url(#br)"/>
<rect x="0" y="25" width="714" height="1" fill="#eeebe0"/><rect x="0" y="26" width="709" height="1" fill="#eeebe0"/>
<rect x="8" y="684" width="708" height="1" fill="#a5a198"/><rect x="3" y="685" width="713" height="1" fill="#a5a198"/>
<rect x="72" y="33" width="623" height="607" fill="#fff"/>
<rect x="72" y="33" width="622" height="1" fill="#a0a0a0"/>
<rect x="72" y="33" width="1" height="606" fill="#a0a0a0"/>
<rect x="73" y="34" width="1" height="605" fill="#b8b8b8"/>
<rect x="73" y="638" width="621" height="1" fill="#bcbcbc"/>
</g>
<g shape-rendering="crispEdges" clip-path="url(#pc)"><path d="M303.1 413.7L98.42 413.82L97.87 411.14L97.61 409.79Z" fill="url(#w0)"/><path d="M303.1 413.7L97.87 411.14L97.35 408.44L97.09 407.09Z" fill="url(#w1)"/><path d="M303.1 413.7L97.35 408.44L96.83 405.73L96.56 404.37Z" fill="url(#w2)"/><path d="M303.1 413.7L96.83 405.73L96.30 403.01L96.04 401.64Z" fill="url(#w3)"/><path d="M303.1 413.7L96.30 403.01L95.77 400.26L95.51 398.88Z" fill="url(#w4)"/><path d="M303.1 413.7L95.77 400.26L95.24 397.50L94.98 396.11Z" fill="url(#w5)"/><path d="M303.1 413.7L95.24 397.50L94.71 394.72L94.46 393.32Z" fill="url(#w6)"/><path d="M303.1 413.7L94.71 394.72L94.20 391.92L93.95 390.51Z" fill="url(#w7)"/><path d="M303.1 413.7L94.20 391.92L93.70 389.10L93.44 387.67Z" fill="url(#w8)"/><path d="M303.1 413.7L93.70 389.10L93.18 386.25L92.93 384.82Z" fill="url(#w9)"/><path d="M303.1 413.7L93.18 386.25L92.67 383.39L92.41 381.94Z" fill="url(#w10)"/><path d="M303.1 413.7L92.67 383.39L92.15 380.49L91.89 379.03Z" fill="url(#w11)"/><path d="M303.1 413.7L92.15 380.49L91.63 377.57L91.39 376.10Z" fill="url(#w12)"/><path d="M303.1 413.7L91.63 377.57L91.14 374.63L90.89 373.15Z" fill="url(#w13)"/><path d="M303.1 413.7L91.14 374.63L90.65 371.66L90.39 370.17Z" fill="url(#w14)"/><path d="M303.1 413.7L90.65 371.66L90.14 368.67L89.89 367.15Z" fill="url(#w15)"/><path d="M303.1 413.7L90.14 368.67L89.64 365.64L89.38 364.11Z" fill="url(#w16)"/><path d="M303.1 413.7L89.64 365.64L89.13 362.58L88.88 361.03Z" fill="url(#w17)"/><path d="M303.1 413.7L89.13 362.58L88.64 359.49L88.40 357.93Z" fill="url(#w18)"/><path d="M303.1 413.7L88.64 359.49L88.16 356.37L87.92 354.79Z" fill="url(#w19)"/><path d="M303.1 413.7L88.16 356.37L87.67 353.21L87.43 351.62Z" fill="url(#w20)"/><path d="M303.1 413.7L87.67 353.21L87.18 350.02L86.93 348.41Z" fill="url(#w21)"/><path d="M303.1 413.7L87.18 350.02L86.68 346.79L86.44 345.15Z" fill="url(#w22)"/><path d="M303.1 413.7L86.68 346.79L86.20 343.52L85.97 341.87Z" fill="url(#w23)"/><path d="M303.1 413.7L86.20 343.52L85.74 340.22L85.50 338.54Z" fill="url(#w24)"/><path d="M303.1 413.7L85.74 340.22L85.27 336.87L85.03 335.18Z" fill="url(#w25)"/><path d="M303.1 413.7L85.27 336.87L84.79 333.48L84.55 331.76Z" fill="url(#w26)"/><path d="M303.1 413.7L84.79 333.48L84.31 330.04L84.08 328.30Z" fill="url(#w27)"/><path d="M303.1 413.7L84.31 330.04L83.85 326.56L83.62 324.80Z" fill="url(#w28)"/><path d="M303.1 413.7L83.85 326.56L83.40 323.04L83.18 321.25Z" fill="url(#w29)"/><path d="M303.1 413.7L83.40 323.04L82.96 319.47L82.73 317.66Z" fill="url(#w30)"/><path d="M303.1 413.7L82.96 319.47L82.50 315.84L82.27 314.00Z" fill="url(#w31)"/><path d="M303.1 413.7L82.50 315.84L82.04 312.16L81.82 310.29Z" fill="url(#w32)"/><path d="M303.1 413.7L82.04 312.16L81.61 308.43L81.40 306.54Z" fill="url(#w33)"/><path d="M303.1 413.7L81.61 308.43L81.19 304.65L80.98 302.73Z" fill="url(#w34)"/><path d="M303.1 413.7L81.19 304.65L80.77 300.81L80.55 298.86Z" fill="url(#w35)"/><path d="M303.1 413.7L80.77 300.81L80.34 296.90L80.13 294.92Z" fill="url(#w36)"/><path d="M303.1 413.7L80.34 296.90L79.92 292.93L79.73 290.92Z" fill="url(#w37)"/><path d="M303.1 413.7L79.92 292.93L79.54 288.92L79.34 286.87Z" fill="url(#w38)"/><path d="M303.1 413.7L79.54 288.92L79.15 284.83L78.95 282.75Z" fill="url(#w39)"/><path d="M303.1 413.7L79.15 284.83L78.76 280.67L78.56 278.55Z" fill="url(#w40)"/><path d="M303.1 413.7L78.76 280.67L78.37 276.43L78.20 274.29Z" fill="url(#w41)"/><path d="M303.1 413.7L78.37 276.43L78.03 272.15L77.86 269.96Z" fill="url(#w42)"/><path d="M303.1 413.7L78.03 272.15L77.69 267.78L77.51 265.56Z" fill="url(#w43)"/><path d="M303.1 413.7L77.69 267.78L77.34 263.33L77.18 261.07Z" fill="url(#w44)"/><path d="M303.1 413.7L77.34 263.33L77.02 258.80L76.88 256.51Z" fill="url(#w45)"/><path d="M303.1 413.7L77.02 258.80L76.74 254.22L76.60 251.88Z" fill="url(#w46)"/><path d="M303.1 413.7L76.74 254.22L76.46 249.54L76.32 247.15Z" fill="url(#w47)"/><path d="M303.1 413.7L76.46 249.54L76.17 244.76L76.08 242.35Z" fill="url(#w48)"/><path d="M303.1 413.7L76.17 244.76L75.98 239.94L75.88 237.49Z" fill="url(#w49)"/><path d="M303.1 413.7L75.98 239.94L75.79 235.03L75.69 232.52Z" fill="url(#w50)"/><path d="M303.1 413.7L75.79 235.03L75.59 230.01L75.54 227.47Z" fill="url(#w51)"/><path d="M303.1 413.7L75.59 230.01L75.48 224.94L75.44 222.36Z" fill="url(#w52)"/><path d="M303.1 413.7L75.48 224.94L75.40 219.79L75.36 217.15Z" fill="url(#w53)"/><path d="M303.1 413.7L75.40 219.79L75.32 214.51L75.33 211.86Z" fill="url(#w54)"/><path d="M303.1 413.7L75.32 214.51L75.35 209.21L75.38 206.51Z" fill="url(#w55)"/><path d="M303.1 413.7L75.35 209.21L75.41 203.81L75.45 201.06Z" fill="url(#w56)"/><path d="M303.1 413.7L75.41 203.81L75.49 198.30L75.59 195.54Z" fill="url(#w57)"/><path d="M303.1 413.7L75.49 198.30L75.70 192.78L75.81 189.95Z" fill="url(#w58)"/><path d="M303.1 413.7L75.70 192.78L75.91 187.13L76.08 184.28Z" fill="url(#w59)"/><path d="M303.1 413.7L75.91 187.13L76.24 181.44L76.44 178.56Z" fill="url(#w60)"/><path d="M303.1 413.7L76.24 181.44L76.64 175.69L76.87 172.77Z" fill="url(#w61)"/><path d="M303.1 413.7L76.64 175.69L77.09 169.84L77.40 166.93Z" fill="url(#w62)"/><path d="M303.1 413.7L77.09 169.84L77.71 164.02L78.03 161.04Z" fill="url(#w63)"/><path d="M303.1 413.7L77.71 164.02L78.35 158.07L78.78 155.14Z" fill="url(#w64)"/><path d="M303.1 413.7L78.35 158.07L79.22 152.22L79.66 149.22Z" fill="url(#w65)"/><path d="M303.1 413.7L79.22 152.22L80.11 146.23L80.69 143.32Z" fill="url(#w66)"/><path d="M303.1 413.7L80.11 146.23L81.27 140.41L81.87 137.45Z" fill="url(#w67)"/><path d="M303.1 413.7L81.27 140.41L82.48 134.49L83.22 131.62Z" fill="url(#w68)"/><path d="M303.1 413.7L82.48 134.49L83.96 128.75L84.76 125.88Z" fill="url(#w69)"/><path d="M303.1 413.7L83.96 128.75L85.55 123.00L86.47 120.21Z" fill="url(#w70)"/><path d="M303.1 413.7L85.55 123.00L87.39 117.41L88.41 114.69Z" fill="url(#w71)"/><path d="M303.1 413.7L87.39 117.41L89.44 111.97L90.55 109.29Z" fill="url(#w72)"/><path d="M303.1 413.7L89.44 111.97L91.66 106.61L92.96 104.13Z" fill="url(#w73)"/><path d="M303.1 413.7L91.66 106.61L94.26 101.66L95.68 99.30Z" fill="url(#w74)"/><path d="M303.1 413.7L94.26 101.66L97.10 96.94L98.67 94.74Z" fill="url(#w75)"/><path d="M303.1 413.7L97.10 96.94L100.23 92.54L102.00 90.58Z" fill="url(#w76)"/><path d="M303.1 413.7L100.23 92.54L103.76 88.63L105.71 86.95Z" fill="url(#w77)"/><path d="M303.1 413.7L103.76 88.63L107.66 85.28L109.79 83.88Z" fill="url(#w78)"/><path d="M303.1 413.7L107.66 85.28L111.92 82.48L114.23 81.39Z" fill="url(#w79)"/><path d="M303.1 413.7L111.92 82.48L116.55 80.30L119.05 79.56Z" fill="url(#w80)"/><path d="M303.1 413.7L116.55 80.30L121.55 78.83L124.24 78.49Z" fill="url(#w81)"/><path d="M303.1 413.7L121.55 78.83L126.93 78.14L129.80 78.22Z" fill="url(#w82)"/><path d="M303.1 413.7L126.93 78.14L132.66 78.29L135.67 78.75Z" fill="url(#w83)"/><path d="M303.1 413.7L132.66 78.29L138.67 79.22L141.78 80.02Z" fill="url(#w84)"/><path d="M303.1 413.7L138.67 79.22L144.88 80.82L148.04 81.88Z" fill="url(#w85)"/><path d="M303.1 413.7L144.88 80.82L151.20 82.95L154.39 84.22Z" fill="url(#w86)"/><path d="M303.1 413.7L151.20 82.95L157.57 85.49L160.76 86.93Z" fill="url(#w87)"/><path d="M303.1 413.7L157.57 85.49L163.94 88.38L167.11 89.97Z" fill="url(#w88)"/><path d="M303.1 413.7L163.94 88.38L170.28 91.55L173.41 93.23Z" fill="url(#w89)"/><path d="M303.1 413.7L170.28 91.55L176.53 94.90L179.60 96.63Z" fill="url(#w90)"/><path d="M303.1 413.7L176.53 94.90L182.67 98.36L185.68 100.12Z" fill="url(#w91)"/><path d="M303.1 413.7L182.67 98.36L188.68 101.88L191.63 103.68Z" fill="url(#w92)"/><path d="M303.1 413.7L188.68 101.88L194.57 105.47L197.45 107.29Z" fill="url(#w93)"/><path d="M303.1 413.7L194.57 105.47L200.32 109.12L203.14 110.97Z" fill="url(#w94)"/><path d="M303.1 413.7L200.32 109.12L205.96 112.82L208.70 114.70Z" fill="url(#w95)"/><path d="M303.1 413.7L205.96 112.82L211.45 116.58L214.14 118.46Z" fill="url(#w96)"/><path d="M303.1 413.7L211.45 116.58L216.82 120.35L219.43 122.24Z" fill="url(#w97)"/><path d="M303.1 413.7L216.82 120.35L222.04 124.13L224.59 126.03Z" fill="url(#w98)"/><path d="M303.1 413.7L222.04 124.13L227.13 127.92L229.61 129.80Z" fill="url(#w99)"/><path d="M303.1 413.7L227.13 127.92L232.08 131.68L234.49 133.56Z" fill="url(#w100)"/><path d="M303.1 413.7L232.08 131.68L236.89 135.43L239.23 137.29Z" fill="url(#w101)"/><path d="M303.1 413.7L236.89 135.43L241.57 139.14L243.84 140.98Z" fill="url(#w102)"/><path d="M303.1 413.7L241.57 139.14L246.11 142.81L248.32 144.62Z" fill="url(#w103)"/><path d="M303.1 413.7L246.11 142.81L250.52 146.43L252.67 148.21Z" fill="url(#w104)"/><path d="M303.1 413.7L250.52 146.43L254.81 149.99L256.89 151.75Z" fill="url(#w105)"/><path d="M303.1 413.7L254.81 149.99L258.97 153.50L260.99 155.22Z" fill="url(#w106)"/><path d="M303.1 413.7L258.97 153.50L263.01 156.94L264.97 158.63Z" fill="url(#w107)"/><path d="M303.1 413.7L263.01 156.94L266.93 160.32L268.84 161.98Z" fill="url(#w108)"/><path d="M303.1 413.7L266.93 160.32L270.74 163.64L272.59 165.27Z" fill="url(#w109)"/><path d="M303.1 413.7L270.74 163.64L274.45 166.89L276.25 168.49Z" fill="url(#w110)"/><path d="M303.1 413.7L274.45 166.89L278.05 170.08L279.80 171.63Z" fill="url(#w111)"/><path d="M303.1 413.7L278.05 170.08L281.55 173.19L283.25 174.72Z" fill="url(#w112)"/><path d="M303.1 413.7L281.55 173.19L284.95 176.25L286.61 177.74Z" fill="url(#w113)"/><path d="M303.1 413.7L284.95 176.25L288.27 179.24L289.88 180.70Z" fill="url(#w114)"/><path d="M303.1 413.7L288.27 179.24L291.49 182.16L293.07 183.59Z" fill="url(#w115)"/><path d="M303.1 413.7L291.49 182.16L294.64 185.03L296.17 186.43Z" fill="url(#w116)"/><path d="M303.1 413.7L294.64 185.03L297.70 187.83L299.20 189.20Z" fill="url(#w117)"/><path d="M303.1 413.7L297.70 187.83L300.69 190.57L302.15 191.92Z" fill="url(#w118)"/><path d="M303.1 413.7L300.69 190.57L303.60 193.26L305.03 194.57Z" fill="url(#w119)"/><path d="M303.1 413.7L303.60 193.26L306.45 195.89L307.84 197.18Z" fill="url(#w120)"/><path d="M303.1 413.7L306.45 195.89L309.23 198.47L310.59 199.73Z" fill="url(#w121)"/><path d="M303.1 413.7L309.23 198.47L311.94 201.00L313.27 202.24Z" fill="url(#w122)"/><path d="M303.1 413.7L311.94 201.00L314.60 203.48L315.89 204.69Z" fill="url(#w123)"/><path d="M303.1 413.7L314.60 203.48L317.19 205.90L318.46 207.10Z" fill="url(#w124)"/><path d="M303.1 413.7L317.19 205.90L319.73 208.29L320.98 209.46Z" fill="url(#w125)"/><path d="M303.1 413.7L319.73 208.29L322.22 210.62L323.44 211.77Z" fill="url(#w126)"/><path d="M303.1 413.7L322.22 210.62L324.66 212.92L325.85 214.05Z" fill="url(#w127)"/><path d="M303.1 413.7L324.66 212.92L327.04 215.17L328.22 216.28Z" fill="url(#w128)"/><path d="M303.1 413.7L327.04 215.17L329.39 217.38L330.53 218.47Z" fill="url(#w129)"/><path d="M303.1 413.7L329.39 217.38L331.68 219.56L332.81 220.63Z" fill="url(#w130)"/><path d="M303.1 413.7L331.68 219.56L333.94 221.69L335.05 222.74Z" fill="url(#w131)"/><path d="M303.1 413.7L333.94 221.69L336.15 223.79L337.24 224.83Z" fill="url(#w132)"/><path d="M303.1 413.7L336.15 223.79L338.33 225.86L339.40 226.88Z" fill="url(#w133)"/><path d="M303.1 413.7L338.33 225.86L340.47 227.89L341.52 228.89Z" fill="url(#w134)"/><path d="M303.1 413.7L340.47 227.89L342.57 229.90L343.60 230.88Z" fill="url(#w135)"/><path d="M303.1 413.7L342.57 229.90L344.64 231.87L345.66 232.84Z" fill="url(#w136)"/><path d="M303.1 413.7L344.64 231.87L346.67 233.81L347.68 234.77Z" fill="url(#w137)"/><path d="M303.1 413.7L346.67 233.81L348.68 235.72L349.67 236.67Z" fill="url(#w138)"/><path d="M303.1 413.7L348.68 235.72L350.65 237.61L351.63 238.54Z" fill="url(#w139)"/><path d="M303.1 413.7L350.65 237.61L352.60 239.47L353.56 240.39Z" fill="url(#w140)"/><path d="M303.1 413.7L352.60 239.47L354.52 241.31L355.47 242.22Z" fill="url(#w141)"/><path d="M303.1 413.7L354.52 241.31L356.42 243.12L357.35 244.02Z" fill="url(#w142)"/><path d="M303.1 413.7L356.42 243.12L358.28 244.92L359.21 245.80Z" fill="url(#w143)"/><path d="M303.1 413.7L358.28 244.92L360.13 246.69L361.04 247.56Z" fill="url(#w144)"/><path d="M303.1 413.7L360.13 246.69L361.95 248.44L362.85 249.30Z" fill="url(#w145)"/><path d="M303.1 413.7L361.95 248.44L363.75 250.17L364.64 251.02Z" fill="url(#w146)"/><path d="M303.1 413.7L363.75 250.17L365.53 251.88L366.41 252.72Z" fill="url(#w147)"/><path d="M303.1 413.7L365.53 251.88L367.29 253.57L368.16 254.41Z" fill="url(#w148)"/><path d="M303.1 413.7L367.29 253.57L369.03 255.24L369.89 256.07Z" fill="url(#w149)"/><path d="M303.1 413.7L369.03 255.24L370.75 256.90L371.61 257.73Z" fill="url(#w150)"/><path d="M303.1 413.7L370.75 256.90L372.46 258.55L373.30 259.36Z" fill="url(#w151)"/><path d="M303.1 413.7L372.46 258.55L374.15 260.18L374.99 260.98Z" fill="url(#w152)"/><path d="M303.1 413.7L374.15 260.18L375.82 261.79L376.65 262.59Z" fill="url(#w153)"/><path d="M303.1 413.7L375.82 261.79L377.48 263.39L378.30 264.18Z" fill="url(#w154)"/><path d="M303.1 413.7L377.48 263.39L379.13 264.98L379.94 265.77Z" fill="url(#w155)"/><path d="M303.1 413.7L379.13 264.98L380.76 266.55L381.57 267.34Z" fill="url(#w156)"/><path d="M303.1 413.7L380.76 266.55L382.38 268.12L383.18 268.89Z" fill="url(#w157)"/><path d="M303.1 413.7L382.38 268.12L383.98 269.67L384.78 270.44Z" fill="url(#w158)"/><path d="M303.1 413.7L383.98 269.67L385.58 271.21L386.37 271.98Z" fill="url(#w159)"/><path d="M303.1 413.7L385.58 271.21L387.16 272.75L387.95 273.51Z" fill="url(#w160)"/><path d="M303.1 413.7L387.16 272.75L388.74 274.27L389.52 275.03Z" fill="url(#w161)"/><path d="M303.1 413.7L388.74 274.27L390.30 275.79L391.08 276.54Z" fill="url(#w162)"/><path d="M303.1 413.7L390.30 275.79L391.86 277.29L392.63 278.04Z" fill="url(#w163)"/><path d="M303.1 413.7L391.86 277.29L393.41 278.79L394.18 279.54Z" fill="url(#w164)"/><path d="M303.1 413.7L393.41 278.79L394.95 280.29L395.71 281.03Z" fill="url(#w165)"/><path d="M303.1 413.7L394.95 280.29L396.48 281.78L397.25 282.52Z" fill="url(#w166)"/><path d="M303.1 413.7L396.48 281.78L398.01 283.26L398.77 283.99Z" fill="url(#w167)"/><path d="M303.1 413.7L398.01 283.26L399.53 284.73L400.29 285.47Z" fill="url(#w168)"/><path d="M303.1 413.7L399.53 284.73L401.05 286.20L401.80 286.94Z" fill="url(#w169)"/><path d="M303.1 413.7L401.05 286.20L402.56 287.67L403.31 288.40Z" fill="url(#w170)"/><path d="M303.1 413.7L402.56 287.67L404.07 289.13L404.82 289.86Z" fill="url(#w171)"/><path d="M303.1 413.7L404.07 289.13L405.57 290.59L406.32 291.32Z" fill="url(#w172)"/><path d="M303.1 413.7L405.57 290.59L407.07 292.05L407.82 292.78Z" fill="url(#w173)"/><path d="M303.1 413.7L407.07 292.05L408.57 293.50L409.32 294.23Z" fill="url(#w174)"/><path d="M303.1 413.7L408.57 293.50L410.06 294.96L410.81 295.68Z" fill="url(#w175)"/><path d="M303.1 413.7L410.06 294.96L411.56 296.41L412.30 297.13Z" fill="url(#w176)"/><path d="M303.1 413.7L411.56 296.41L413.05 297.86L413.80 298.58Z" fill="url(#w177)"/><path d="M303.1 413.7L413.05 297.86L414.54 299.31L415.29 300.03Z" fill="url(#w178)"/><path d="M303.1 413.7L414.54 299.31L416.04 300.76L416.78 301.48Z" fill="url(#w179)"/><path d="M303.1 413.7L416.04 300.76L417.53 302.21L418.28 302.93Z" fill="url(#w180)"/><path d="M303.1 413.7L417.53 302.21L419.02 303.66L419.77 304.39Z" fill="url(#w181)"/><path d="M303.1 413.7L419.02 303.66L420.52 305.11L421.27 305.84Z" fill="url(#w182)"/><path d="M303.1 413.7L420.52 305.11L422.02 306.57L422.77 307.30Z" fill="url(#w183)"/><path d="M303.1 413.7L422.02 306.57L423.52 308.03L424.27 308.76Z" fill="url(#w184)"/><path d="M303.1 413.7L423.52 308.03L425.02 309.49L425.78 310.22Z" fill="url(#w185)"/><path d="M303.1 413.7L425.02 309.49L426.53 310.95L427.29 311.69Z" fill="url(#w186)"/><path d="M303.1 413.7L426.53 310.95L428.04 312.42L428.80 313.16Z" fill="url(#w187)"/><path d="M303.1 413.7L428.04 312.42L429.56 313.89L430.32 314.63Z" fill="url(#w188)"/><path d="M303.1 413.7L429.56 313.89L431.08 315.37L431.84 316.11Z" fill="url(#w189)"/><path d="M303.1 413.7L431.08 315.37L432.61 316.85L433.38 317.60Z" fill="url(#w190)"/><path d="M303.1 413.7L432.61 316.85L434.14 318.34L434.92 319.09Z" fill="url(#w191)"/><path d="M303.1 413.7L434.14 318.34L435.69 319.84L436.46 320.59Z" fill="url(#w192)"/><path d="M303.1 413.7L435.69 319.84L437.24 321.34L438.02 322.10Z" fill="url(#w193)"/><path d="M303.1 413.7L437.24 321.34L438.79 322.85L439.58 323.61Z" fill="url(#w194)"/><path d="M303.1 413.7L438.79 322.85L440.36 324.37L441.15 325.14Z" fill="url(#w195)"/><path d="M303.1 413.7L440.36 324.37L441.94 325.90L442.73 326.67Z" fill="url(#w196)"/><path d="M303.1 413.7L441.94 325.90L443.53 327.44L444.32 328.21Z" fill="url(#w197)"/><path d="M303.1 413.7L443.53 327.44L445.12 328.99L445.93 329.77Z" fill="url(#w198)"/><path d="M303.1 413.7L445.12 328.99L446.73 330.55L447.54 331.33Z" fill="url(#w199)"/><path d="M303.1 413.7L446.73 330.55L448.35 332.12L449.17 332.91Z" fill="url(#w200)"/><path d="M303.1 413.7L448.35 332.12L449.99 333.70L450.81 334.50Z" fill="url(#w201)"/><path d="M303.1 413.7L449.99 333.70L451.64 335.30L452.47 336.10Z" fill="url(#w202)"/><path d="M303.1 413.7L451.64 335.30L453.30 336.91L454.14 337.72Z" fill="url(#w203)"/><path d="M303.1 413.7L453.30 336.91L454.97 338.53L455.82 339.35Z" fill="url(#w204)"/><path d="M303.1 413.7L454.97 338.53L456.67 340.17L457.52 341.00Z" fill="url(#w205)"/><path d="M303.1 413.7L456.67 340.17L458.38 341.83L459.24 342.67Z" fill="url(#w206)"/><path d="M303.1 413.7L458.38 341.83L460.10 343.50L460.98 344.35Z" fill="url(#w207)"/><path d="M303.1 413.7L460.10 343.50L461.85 345.19L462.73 346.05Z" fill="url(#w208)"/><path d="M303.1 413.7L461.85 345.19L463.61 346.90L464.51 347.77Z" fill="url(#w209)"/><path d="M303.1 413.7L463.61 346.90L465.40 348.63L466.30 349.51Z" fill="url(#w210)"/><path d="M303.1 413.7L465.40 348.63L467.20 350.38L468.12 351.27Z" fill="url(#w211)"/><path d="M303.1 413.7L467.20 350.38L469.03 352.15L469.95 353.05Z" fill="url(#w212)"/><path d="M303.1 413.7L469.03 352.15L470.88 353.95L471.81 354.85Z" fill="url(#w213)"/><path d="M303.1 413.7L470.88 353.95L472.75 355.76L473.70 356.68Z" fill="url(#w214)"/><path d="M303.1 413.7L472.75 355.76L474.64 357.61L475.60 358.54Z" fill="url(#w215)"/><path d="M303.1 413.7L474.64 357.61L476.57 359.47L477.54 360.42Z" fill="url(#w216)"/><path d="M303.1 413.7L476.57 359.47L478.51 361.37L479.50 362.33Z" fill="url(#w217)"/><path d="M303.1 413.7L478.51 361.37L480.49 363.29L481.49 364.27Z" fill="url(#w218)"/><path d="M303.1 413.7L480.49 363.29L482.50 365.25L483.52 366.24Z" fill="url(#w219)"/><path d="M303.1 413.7L482.50 365.25L484.53 367.23L485.57 368.24Z" fill="url(#w220)"/><path d="M303.1 413.7L484.53 367.23L486.61 369.24L487.66 370.27Z" fill="url(#w221)"/><path d="M303.1 413.7L486.61 369.24L488.71 371.29L489.78 372.33Z" fill="url(#w222)"/><path d="M303.1 413.7L488.71 371.29L490.86 373.38L491.95 374.44Z" fill="url(#w223)"/><path d="M303.1 413.7L490.86 373.38L493.04 375.50L494.15 376.58Z" fill="url(#w224)"/><path d="M303.1 413.7L493.04 375.50L495.26 377.66L496.40 378.76Z" fill="url(#w225)"/><path d="M303.1 413.7L495.26 377.66L497.53 379.85L498.69 380.98Z" fill="url(#w226)"/><path d="M303.1 413.7L497.53 379.85L499.84 382.10L501.02 383.24Z" fill="url(#w227)"/><path d="M303.1 413.7L499.84 382.10L502.20 384.38L503.40 385.55Z" fill="url(#w228)"/><path d="M303.1 413.7L502.20 384.38L504.61 386.71L505.83 387.91Z" fill="url(#w229)"/><path d="M303.1 413.7L504.61 386.71L507.06 389.10L508.31 390.31Z" fill="url(#w230)"/><path d="M303.1 413.7L507.06 389.10L509.57 391.53L510.85 392.77Z" fill="url(#w231)"/><path d="M303.1 413.7L509.57 391.53L512.13 394.02L513.44 395.29Z" fill="url(#w232)"/><path d="M303.1 413.7L512.13 394.02L514.75 396.56L516.10 397.86Z" fill="url(#w233)"/><path d="M303.1 413.7L514.75 396.56L517.44 399.16L518.81 400.49Z" fill="url(#w234)"/><path d="M303.1 413.7L517.44 399.16L520.19 401.82L521.60 403.19Z" fill="url(#w235)"/><path d="M303.1 413.7L520.19 401.82L523.01 404.55L524.46 405.95Z" fill="url(#w236)"/><path d="M303.1 413.7L523.01 404.55L525.91 407.35L527.40 408.79Z" fill="url(#w237)"/><path d="M303.1 413.7L525.91 407.35L528.88 410.23L530.41 411.70Z" fill="url(#w238)"/><path d="M303.1 413.7L528.88 410.23L531.94 413.17L533.50 414.69Z" fill="url(#w239)"/><path d="M303.1 413.7L531.94 413.17L535.07 416.21L536.67 417.76Z" fill="url(#w240)"/><path d="M303.1 413.7L535.07 416.21L538.28 419.32L539.93 420.92Z" fill="url(#w241)"/><path d="M303.1 413.7L538.28 419.32L541.57 422.53L543.27 424.17Z" fill="url(#w242)"/><path d="M303.1 413.7L541.57 422.53L544.97 425.82L546.71 427.52Z" fill="url(#w243)"/><path d="M303.1 413.7L544.97 425.82L548.46 429.22L550.27 430.98Z" fill="url(#w244)"/><path d="M303.1 413.7L548.46 429.22L552.07 432.73L553.94 434.54Z" fill="url(#w245)"/><path d="M303.1 413.7L552.07 432.73L555.82 436.35L557.75 438.22Z" fill="url(#w246)"/><path d="M303.1 413.7L555.82 436.35L559.68 440.09L561.67 442.02Z" fill="url(#w247)"/><path d="M303.1 413.7L559.68 440.09L563.66 443.95L565.72 445.95Z" fill="url(#w248)"/><path d="M303.1 413.7L563.66 443.95L567.77 447.95L569.90 450.02Z" fill="url(#w249)"/><path d="M303.1 413.7L567.77 447.95L572.03 452.09L574.25 454.24Z" fill="url(#w250)"/><path d="M303.1 413.7L572.03 452.09L576.46 456.39L578.34 458.24Z" fill="url(#w251)"/><path d="M303.1 413.7L576.46 456.39L580.22 460.09L579.47 460.85Z" fill="url(#w252)"/><path d="M303.1 413.7L580.22 460.09L578.72 461.62L575.81 462.94Z" fill="url(#w253)"/><path d="M303.1 413.7L578.72 461.62L572.89 464.26L570.08 465.53Z" fill="url(#w254)"/><path d="M303.1 413.7L572.89 464.26L567.28 466.80L564.57 468.02Z" fill="url(#w255)"/><path d="M303.1 413.7L567.28 466.80L561.86 469.25L559.25 470.43Z" fill="url(#w256)"/><path d="M303.1 413.7L561.86 469.25L556.64 471.61L554.12 472.76Z" fill="url(#w257)"/><path d="M303.1 413.7L556.64 471.61L551.59 473.90L549.15 475.00Z" fill="url(#w258)"/><path d="M303.1 413.7L551.59 473.90L546.71 476.10L544.35 477.17Z" fill="url(#w259)"/><path d="M303.1 413.7L546.71 476.10L541.99 478.24L539.70 479.28Z" fill="url(#w260)"/><path d="M303.1 413.7L541.99 478.24L537.42 480.31L535.20 481.31Z" fill="url(#w261)"/><path d="M303.1 413.7L537.42 480.31L532.98 482.32L530.83 483.29Z" fill="url(#w262)"/><path d="M303.1 413.7L532.98 482.32L528.68 484.26L526.59 485.21Z" fill="url(#w263)"/><path d="M303.1 413.7L528.68 484.26L524.51 486.15L522.48 487.07Z" fill="url(#w264)"/><path d="M303.1 413.7L524.51 486.15L520.45 487.99L518.48 488.88Z" fill="url(#w265)"/><path d="M303.1 413.7L520.45 487.99L516.50 489.77L514.58 490.64Z" fill="url(#w266)"/><path d="M303.1 413.7L516.50 489.77L512.66 491.51L510.79 492.36Z" fill="url(#w267)"/><path d="M303.1 413.7L512.66 491.51L508.92 493.20L507.10 494.03Z" fill="url(#w268)"/><path d="M303.1 413.7L508.92 493.20L505.28 494.85L503.50 495.65Z" fill="url(#w269)"/><path d="M303.1 413.7L505.28 494.85L501.73 496.46L499.99 497.24Z" fill="url(#w270)"/><path d="M303.1 413.7L501.73 496.46L498.26 498.03L496.57 498.79Z" fill="url(#w271)"/><path d="M303.1 413.7L498.26 498.03L494.88 499.56L493.22 500.31Z" fill="url(#w272)"/><path d="M303.1 413.7L494.88 499.56L491.57 501.05L489.95 501.79Z" fill="url(#w273)"/><path d="M303.1 413.7L491.57 501.05L488.34 502.52L486.75 503.23Z" fill="url(#w274)"/><path d="M303.1 413.7L488.34 502.52L485.17 503.95L483.63 504.65Z" fill="url(#w275)"/><path d="M303.1 413.7L485.17 503.95L482.08 505.35L480.56 506.03Z" fill="url(#w276)"/><path d="M303.1 413.7L482.08 505.35L479.05 506.72L477.56 507.39Z" fill="url(#w277)"/><path d="M303.1 413.7L479.05 506.72L476.08 508.06L474.62 508.72Z" fill="url(#w278)"/><path d="M303.1 413.7L476.08 508.06L473.17 509.38L471.74 510.03Z" fill="url(#w279)"/><path d="M303.1 413.7L473.17 509.38L470.31 510.67L468.91 511.31Z" fill="url(#w280)"/><path d="M303.1 413.7L470.31 510.67L467.51 511.94L466.13 512.56Z" fill="url(#w281)"/><path d="M303.1 413.7L467.51 511.94L464.76 513.18L463.41 513.80Z" fill="url(#w282)"/><path d="M303.1 413.7L464.76 513.18L462.05 514.41L460.73 515.01Z" fill="url(#w283)"/><path d="M303.1 413.7L462.05 514.41L459.40 515.61L458.09 516.20Z" fill="url(#w284)"/><path d="M303.1 413.7L459.40 515.61L456.78 516.79L455.50 517.37Z" fill="url(#w285)"/><path d="M303.1 413.7L456.78 516.79L454.21 517.95L452.95 518.53Z" fill="url(#w286)"/><path d="M303.1 413.7L454.21 517.95L451.68 519.10L450.44 519.66Z" fill="url(#w287)"/><path d="M303.1 413.7L451.68 519.10L449.19 520.23L447.96 520.78Z" fill="url(#w288)"/><path d="M303.1 413.7L449.19 520.23L446.74 521.34L445.53 521.88Z" fill="url(#w289)"/><path d="M303.1 413.7L446.74 521.34L444.32 522.43L443.13 522.97Z" fill="url(#w290)"/><path d="M303.1 413.7L444.32 522.43L441.93 523.51L440.76 524.04Z" fill="url(#w291)"/><path d="M303.1 413.7L441.93 523.51L439.58 524.58L438.42 525.10Z" fill="url(#w292)"/><path d="M303.1 413.7L439.58 524.58L437.26 525.63L436.11 526.15Z" fill="url(#w293)"/><path d="M303.1 413.7L437.26 525.63L434.96 526.66L433.83 527.18Z" fill="url(#w294)"/><path d="M303.1 413.7L434.96 526.66L432.70 527.69L431.58 528.20Z" fill="url(#w295)"/><path d="M303.1 413.7L432.70 527.69L430.46 528.70L429.35 529.20Z" fill="url(#w296)"/><path d="M303.1 413.7L430.46 528.70L428.24 529.70L427.15 530.20Z" fill="url(#w297)"/><path d="M303.1 413.7L428.24 529.70L426.06 530.69L424.97 531.18Z" fill="url(#w298)"/><path d="M303.1 413.7L426.06 530.69L423.89 531.67L422.82 532.16Z" fill="url(#w299)"/><path d="M303.1 413.7L423.89 531.67L421.75 532.64L420.69 533.12Z" fill="url(#w300)"/><path d="M303.1 413.7L421.75 532.64L419.62 533.60L418.57 534.08Z" fill="url(#w301)"/><path d="M303.1 413.7L419.62 533.60L417.52 534.56L416.48 535.03Z" fill="url(#w302)"/><path d="M303.1 413.7L417.52 534.56L415.44 535.50L414.41 535.97Z" fill="url(#w303)"/><path d="M303.1 413.7L415.44 535.50L413.37 536.43L412.35 536.90Z" fill="url(#w304)"/><path d="M303.1 413.7L413.37 536.43L411.32 537.36L410.31 537.82Z" fill="url(#w305)"/><path d="M303.1 413.7L411.32 537.36L409.29 538.28L408.28 538.73Z" fill="url(#w306)"/><path d="M303.1 413.7L409.29 538.28L407.28 539.19L406.27 539.64Z" fill="url(#w307)"/><path d="M303.1 413.7L407.28 539.19L405.27 540.10L404.28 540.55Z" fill="url(#w308)"/><path d="M303.1 413.7L405.27 540.10L403.29 541.00L402.30 541.44Z" fill="url(#w309)"/><path d="M303.1 413.7L403.29 541.00L401.31 541.89L400.33 542.33Z" fill="url(#w310)"/><path d="M303.1 413.7L401.31 541.89L399.35 542.78L398.37 543.22Z" fill="url(#w311)"/><path d="M303.1 413.7L399.35 542.78L397.39 543.66L396.42 544.10Z" fill="url(#w312)"/><path d="M303.1 413.7L397.39 543.66L395.45 544.54L394.49 544.98Z" fill="url(#w313)"/><path d="M303.1 413.7L395.45 544.54L393.52 545.41L392.56 545.85Z" fill="url(#w314)"/><path d="M303.1 413.7L393.52 545.41L391.60 546.28L390.64 546.72Z" fill="url(#w315)"/><path d="M303.1 413.7L391.60 546.28L389.68 547.15L388.73 547.58Z" fill="url(#w316)"/><path d="M303.1 413.7L389.68 547.15L387.78 548.01L386.83 548.44Z" fill="url(#w317)"/><path d="M303.1 413.7L387.78 548.01L385.88 548.87L384.93 549.30Z" fill="url(#w318)"/><path d="M303.1 413.7L385.88 548.87L383.98 549.73L383.04 550.16Z" fill="url(#w319)"/><path d="M303.1 413.7L383.98 549.73L382.09 550.58L381.15 551.01Z" fill="url(#w320)"/><path d="M303.1 413.7L382.09 550.58L380.21 551.44L379.27 551.86Z" fill="url(#w321)"/><path d="M303.1 413.7L380.21 551.44L378.33 552.29L377.39 552.71Z" fill="url(#w322)"/><path d="M303.1 413.7L378.33 552.29L376.45 553.14L375.52 553.56Z" fill="url(#w323)"/><path d="M303.1 413.7L376.45 553.14L374.58 553.98L373.65 554.41Z" fill="url(#w324)"/><path d="M303.1 413.7L374.58 553.98L372.71 554.83L371.78 555.25Z" fill="url(#w325)"/><path d="M303.1 413.7L372.71 554.83L370.84 555.67L369.91 556.10Z" fill="url(#w326)"/><path d="M303.1 413.7L370.84 555.67L368.98 556.52L368.04 556.94Z" fill="url(#w327)"/><path d="M303.1 413.7L368.98 556.52L367.11 557.36L366.17 557.79Z" fill="url(#w328)"/><path d="M303.1 413.7L367.11 557.36L365.24 558.21L364.31 558.63Z" fill="url(#w329)"/><path d="M303.1 413.7L365.24 558.21L363.37 559.06L362.44 559.48Z" fill="url(#w330)"/><path d="M303.1 413.7L363.37 559.06L361.50 559.90L360.56 560.33Z" fill="url(#w331)"/><path d="M303.1 413.7L361.50 559.90L359.63 560.75L358.69 561.17Z" fill="url(#w332)"/><path d="M303.1 413.7L359.63 560.75L357.75 561.60L356.81 562.02Z" fill="url(#w333)"/><path d="M303.1 413.7L357.75 561.60L355.87 562.45L354.93 562.87Z" fill="url(#w334)"/><path d="M303.1 413.7L355.87 562.45L353.99 563.30L353.05 563.73Z" fill="url(#w335)"/><path d="M303.1 413.7L353.99 563.30L352.10 564.15L351.16 564.58Z" fill="url(#w336)"/><path d="M303.1 413.7L352.10 564.15L350.21 565.01L349.26 565.44Z" fill="url(#w337)"/><path d="M303.1 413.7L350.21 565.01L348.31 565.87L347.36 566.30Z" fill="url(#w338)"/><path d="M303.1 413.7L348.31 565.87L346.40 566.73L345.45 567.16Z" fill="url(#w339)"/><path d="M303.1 413.7L346.40 566.73L344.49 567.60L343.53 568.03Z" fill="url(#w340)"/><path d="M303.1 413.7L344.49 567.60L342.57 568.47L341.60 568.90Z" fill="url(#w341)"/><path d="M303.1 413.7L342.57 568.47L340.64 569.34L339.67 569.78Z" fill="url(#w342)"/><path d="M303.1 413.7L340.64 569.34L338.70 570.22L337.72 570.66Z" fill="url(#w343)"/><path d="M303.1 413.7L338.70 570.22L336.74 571.10L335.76 571.55Z" fill="url(#w344)"/><path d="M303.1 413.7L336.74 571.10L334.78 571.99L333.79 572.44Z" fill="url(#w345)"/><path d="M303.1 413.7L334.78 571.99L332.81 572.88L331.81 573.33Z" fill="url(#w346)"/><path d="M303.1 413.7L332.81 572.88L330.82 573.78L329.82 574.24Z" fill="url(#w347)"/><path d="M303.1 413.7L330.82 573.78L328.82 574.69L327.81 575.14Z" fill="url(#w348)"/><path d="M303.1 413.7L328.82 574.69L326.80 575.60L325.79 576.06Z" fill="url(#w349)"/><path d="M303.1 413.7L326.80 575.60L324.77 576.52L323.75 576.98Z" fill="url(#w350)"/><path d="M303.1 413.7L324.77 576.52L322.73 577.44L321.69 577.91Z" fill="url(#w351)"/><path d="M303.1 413.7L322.73 577.44L320.66 578.38L319.62 578.85Z" fill="url(#w352)"/><path d="M303.1 413.7L320.66 578.38L318.58 579.32L317.53 579.80Z" fill="url(#w353)"/><path d="M303.1 413.7L318.58 579.32L316.48 580.27L315.42 580.75Z" fill="url(#w354)"/><path d="M303.1 413.7L316.48 580.27L314.36 581.23L313.29 581.72Z" fill="url(#w355)"/><path d="M303.1 413.7L314.36 581.23L312.22 582.20L311.13 582.69Z" fill="url(#w356)"/><path d="M303.1 413.7L312.22 582.20L310.05 583.18L308.96 583.67Z" fill="url(#w357)"/><path d="M303.1 413.7L310.05 583.18L307.87 584.17L306.76 584.67Z" fill="url(#w358)"/><path d="M303.1 413.7L307.87 584.17L305.65 585.17L304.54 585.67Z" fill="url(#w359)"/><path d="M303.1 413.7L305.65 585.17L303.42 586.18L302.29 586.69Z" fill="url(#w360)"/><path d="M303.1 413.7L303.42 586.18L301.15 587.20L300.01 587.72Z" fill="url(#w361)"/><path d="M303.1 413.7L301.15 587.20L298.86 588.24L297.70 588.77Z" fill="url(#w362)"/><path d="M303.1 413.7L298.86 588.24L296.54 589.29L295.37 589.82Z" fill="url(#w363)"/><path d="M303.1 413.7L296.54 589.29L294.19 590.35L293.00 590.89Z" fill="url(#w364)"/><path d="M303.1 413.7L294.19 590.35L291.81 591.43L290.60 591.98Z" fill="url(#w365)"/><path d="M303.1 413.7L291.81 591.43L289.39 592.53L288.17 593.08Z" fill="url(#w366)"/><path d="M303.1 413.7L289.39 592.53L286.94 593.64L285.70 594.20Z" fill="url(#w367)"/><path d="M303.1 413.7L286.94 593.64L284.45 594.76L283.19 595.33Z" fill="url(#w368)"/><path d="M303.1 413.7L284.45 594.76L281.93 595.90L280.64 596.49Z" fill="url(#w369)"/><path d="M303.1 413.7L281.93 595.90L279.36 597.07L278.05 597.66Z" fill="url(#w370)"/><path d="M303.1 413.7L279.36 597.07L276.75 598.25L275.42 598.85Z" fill="url(#w371)"/><path d="M303.1 413.7L276.75 598.25L274.10 599.45L272.75 600.06Z" fill="url(#w372)"/><path d="M303.1 413.7L274.10 599.45L271.40 600.67L270.02 601.29Z" fill="url(#w373)"/><path d="M303.1 413.7L271.40 600.67L268.65 601.91L267.25 602.54Z" fill="url(#w374)"/><path d="M303.1 413.7L268.65 601.91L265.85 603.18L264.43 603.82Z" fill="url(#w375)"/><path d="M303.1 413.7L265.85 603.18L263.00 604.47L261.55 605.12Z" fill="url(#w376)"/><path d="M303.1 413.7L263.00 604.47L260.09 605.78L258.61 606.45Z" fill="url(#w377)"/><path d="M303.1 413.7L260.09 605.78L257.13 607.12L255.62 607.81Z" fill="url(#w378)"/><path d="M303.1 413.7L257.13 607.12L254.10 608.49L252.56 609.19Z" fill="url(#w379)"/><path d="M303.1 413.7L254.10 608.49L251.01 609.89L249.44 610.60Z" fill="url(#w380)"/><path d="M303.1 413.7L251.01 609.89L247.86 611.32L246.24 612.05Z" fill="url(#w381)"/><path d="M303.1 413.7L247.86 611.32L244.63 612.78L242.98 613.52Z" fill="url(#w382)"/><path d="M303.1 413.7L244.63 612.78L241.33 614.27L239.64 615.04Z" fill="url(#w383)"/><path d="M303.1 413.7L241.33 614.27L237.95 615.80L236.22 616.58Z" fill="url(#w384)"/><path d="M303.1 413.7L237.95 615.80L234.49 617.37L232.72 618.17Z" fill="url(#w385)"/><path d="M303.1 413.7L234.49 617.37L230.95 618.97L229.13 619.79Z" fill="url(#w386)"/><path d="M303.1 413.7L230.95 618.97L227.31 620.61L225.44 621.46Z" fill="url(#w387)"/><path d="M303.1 413.7L227.31 620.61L223.58 622.30L221.66 623.17Z" fill="url(#w388)"/><path d="M303.1 413.7L223.58 622.30L219.75 624.04L217.78 624.93Z" fill="url(#w389)"/><path d="M303.1 413.7L219.75 624.04L215.81 625.82L213.79 626.73Z" fill="url(#w390)"/><path d="M303.1 413.7L215.81 625.82L211.76 627.65L209.68 628.59Z" fill="url(#w391)"/><path d="M303.1 413.7L211.76 627.65L207.60 629.53L205.45 630.50Z" fill="url(#w392)"/><path d="M303.1 413.7L207.60 629.53L203.31 631.47L201.10 632.48Z" fill="url(#w393)"/><path d="M303.1 413.7L203.31 631.47L198.88 633.48L196.60 634.51Z" fill="url(#w394)"/><path d="M303.1 413.7L198.88 633.48L194.32 635.54L193.84 635.70Z" fill="url(#w395)"/><path d="M303.1 413.7L194.32 635.54L193.36 635.86L191.83 635.48Z" fill="url(#w396)"/><path d="M303.1 413.7L193.36 635.86L190.31 635.10L188.96 634.01Z" fill="url(#w397)"/><path d="M303.1 413.7L190.31 635.10L187.61 632.92L186.36 631.82Z" fill="url(#w398)"/><path d="M303.1 413.7L187.61 632.92L185.12 630.71L183.87 629.64Z" fill="url(#w399)"/><path d="M303.1 413.7L185.12 630.71L182.62 628.58L181.38 627.51Z" fill="url(#w400)"/><path d="M303.1 413.7L182.62 628.58L180.13 626.45L178.90 625.38Z" fill="url(#w401)"/><path d="M303.1 413.7L180.13 626.45L177.66 624.31L176.45 623.20Z" fill="url(#w402)"/><path d="M303.1 413.7L177.66 624.31L175.24 622.10L174.07 620.94Z" fill="url(#w403)"/><path d="M303.1 413.7L175.24 622.10L172.89 619.79L171.76 618.59Z" fill="url(#w404)"/><path d="M303.1 413.7L172.89 619.79L170.62 617.39L169.53 616.14Z" fill="url(#w405)"/><path d="M303.1 413.7L170.62 617.39L168.44 614.89L167.41 613.58Z" fill="url(#w406)"/><path d="M303.1 413.7L168.44 614.89L166.37 612.27L165.39 610.91Z" fill="url(#w407)"/><path d="M303.1 413.7L166.37 612.27L164.41 609.54L163.48 608.15Z" fill="url(#w408)"/><path d="M303.1 413.7L164.41 609.54L162.54 606.76L161.64 605.35Z" fill="url(#w409)"/><path d="M303.1 413.7L162.54 606.76L160.74 603.94L159.87 602.51Z" fill="url(#w410)"/><path d="M303.1 413.7L160.74 603.94L159.01 601.08L158.17 599.63Z" fill="url(#w411)"/><path d="M303.1 413.7L159.01 601.08L157.34 598.19L156.53 596.74Z" fill="url(#w412)"/><path d="M303.1 413.7L157.34 598.19L155.72 595.28L154.95 593.82Z" fill="url(#w413)"/><path d="M303.1 413.7L155.72 595.28L154.17 592.37L153.41 590.90Z" fill="url(#w414)"/><path d="M303.1 413.7L154.17 592.37L152.66 589.44L151.93 587.97Z" fill="url(#w415)"/><path d="M303.1 413.7L152.66 589.44L151.21 586.50L150.50 585.03Z" fill="url(#w416)"/><path d="M303.1 413.7L151.21 586.50L149.80 583.57L149.11 582.10Z" fill="url(#w417)"/><path d="M303.1 413.7L149.80 583.57L148.42 580.64L147.76 579.17Z" fill="url(#w418)"/><path d="M303.1 413.7L148.42 580.64L147.11 577.70L146.46 576.25Z" fill="url(#w419)"/><path d="M303.1 413.7L147.11 577.70L145.81 574.79L145.19 573.33Z" fill="url(#w420)"/><path d="M303.1 413.7L145.81 574.79L144.57 571.87L143.95 570.42Z" fill="url(#w421)"/><path d="M303.1 413.7L144.57 571.87L143.34 568.97L142.75 567.53Z" fill="url(#w422)"/><path d="M303.1 413.7L143.34 568.97L142.16 566.08L141.57 564.65Z" fill="url(#w423)"/><path d="M303.1 413.7L142.16 566.08L140.99 563.22L140.43 561.79Z" fill="url(#w424)"/><path d="M303.1 413.7L140.99 563.22L139.86 560.36L139.30 558.94Z" fill="url(#w425)"/><path d="M303.1 413.7L139.86 560.36L138.74 557.52L138.20 556.11Z" fill="url(#w426)"/><path d="M303.1 413.7L138.74 557.52L137.65 554.70L137.12 553.30Z" fill="url(#w427)"/><path d="M303.1 413.7L137.65 554.70L136.58 551.90L136.05 550.51Z" fill="url(#w428)"/><path d="M303.1 413.7L136.58 551.90L135.52 549.12L135.01 547.73Z" fill="url(#w429)"/><path d="M303.1 413.7L135.52 549.12L134.49 546.35L133.98 544.97Z" fill="url(#w430)"/><path d="M303.1 413.7L134.49 546.35L133.47 543.60L132.97 542.23Z" fill="url(#w431)"/><path d="M303.1 413.7L133.47 543.60L132.47 540.87L131.97 539.51Z" fill="url(#w432)"/><path d="M303.1 413.7L132.47 540.87L131.48 538.14L131.00 536.79Z" fill="url(#w433)"/><path d="M303.1 413.7L131.48 538.14L130.51 535.44L130.03 534.10Z" fill="url(#w434)"/><path d="M303.1 413.7L130.51 535.44L129.55 532.75L129.09 531.41Z" fill="url(#w435)"/><path d="M303.1 413.7L129.55 532.75L128.62 530.07L128.16 528.73Z" fill="url(#w436)"/><path d="M303.1 413.7L128.62 530.07L127.70 527.40L127.24 526.07Z" fill="url(#w437)"/><path d="M303.1 413.7L127.70 527.40L126.79 524.75L126.35 523.42Z" fill="url(#w438)"/><path d="M303.1 413.7L126.79 524.75L125.91 522.09L125.47 520.77Z" fill="url(#w439)"/><path d="M303.1 413.7L125.91 522.09L125.04 519.45L124.61 518.14Z" fill="url(#w440)"/><path d="M303.1 413.7L125.04 519.45L124.18 516.83L123.75 515.52Z" fill="url(#w441)"/><path d="M303.1 413.7L124.18 516.83L123.32 514.21L122.92 512.90Z" fill="url(#w442)"/><path d="M303.1 413.7L123.32 514.21L122.51 511.59L122.11 510.29Z" fill="url(#w443)"/><path d="M303.1 413.7L122.51 511.59L121.71 508.98L121.30 507.69Z" fill="url(#w444)"/><path d="M303.1 413.7L121.71 508.98L120.90 506.39L120.50 505.10Z" fill="url(#w445)"/><path d="M303.1 413.7L120.90 506.39L120.11 503.80L119.73 502.51Z" fill="url(#w446)"/><path d="M303.1 413.7L120.11 503.80L119.36 501.21L118.98 499.92Z" fill="url(#w447)"/><path d="M303.1 413.7L119.36 501.21L118.61 498.63L118.24 497.34Z" fill="url(#w448)"/><path d="M303.1 413.7L118.61 498.63L117.87 496.06L117.50 494.77Z" fill="url(#w449)"/><path d="M303.1 413.7L117.87 496.06L117.13 493.49L116.77 492.21Z" fill="url(#w450)"/><path d="M303.1 413.7L117.13 493.49L116.42 490.92L116.07 489.64Z" fill="url(#w451)"/><path d="M303.1 413.7L116.42 490.92L115.73 488.36L115.38 487.08Z" fill="url(#w452)"/><path d="M303.1 413.7L115.73 488.36L115.04 485.80L114.69 484.53Z" fill="url(#w453)"/><path d="M303.1 413.7L115.04 485.80L114.35 483.26L114.01 481.98Z" fill="url(#w454)"/><path d="M303.1 413.7L114.35 483.26L113.66 480.71L113.34 479.43Z" fill="url(#w455)"/><path d="M303.1 413.7L113.66 480.71L113.02 478.15L112.69 476.88Z" fill="url(#w456)"/><path d="M303.1 413.7L113.02 478.15L112.37 475.61L112.05 474.34Z" fill="url(#w457)"/><path d="M303.1 413.7L112.37 475.61L111.73 473.07L111.41 471.80Z" fill="url(#w458)"/><path d="M303.1 413.7L111.73 473.07L111.09 470.53L110.77 469.27Z" fill="url(#w459)"/><path d="M303.1 413.7L111.09 470.53L110.44 468.00L110.14 466.72Z" fill="url(#w460)"/><path d="M303.1 413.7L110.44 468.00L109.84 465.45L109.53 464.18Z" fill="url(#w461)"/><path d="M303.1 413.7L109.84 465.45L109.23 462.91L108.93 461.64Z" fill="url(#w462)"/><path d="M303.1 413.7L109.23 462.91L108.62 460.37L108.32 459.11Z" fill="url(#w463)"/><path d="M303.1 413.7L108.62 460.37L108.02 457.84L107.71 456.57Z" fill="url(#w464)"/><path d="M303.1 413.7L108.02 457.84L107.41 455.29L107.12 454.02Z" fill="url(#w465)"/><path d="M303.1 413.7L107.41 455.29L106.82 452.75L106.53 451.47Z" fill="url(#w466)"/><path d="M303.1 413.7L106.82 452.75L106.24 450.20L105.96 448.92Z" fill="url(#w467)"/><path d="M303.1 413.7L106.24 450.20L105.67 447.65L105.38 446.37Z" fill="url(#w468)"/><path d="M303.1 413.7L105.67 447.65L105.09 445.09L104.79 443.81Z" fill="url(#w469)"/><path d="M303.1 413.7L105.09 445.09L104.50 442.53L104.22 441.25Z" fill="url(#w470)"/><path d="M303.1 413.7L104.50 442.53L103.93 439.96L103.65 438.68Z" fill="url(#w471)"/><path d="M303.1 413.7L103.93 439.96L103.37 437.39L103.09 436.10Z" fill="url(#w472)"/><path d="M303.1 413.7L103.37 437.39L102.81 434.81L102.53 433.51Z" fill="url(#w473)"/><path d="M303.1 413.7L102.81 434.81L102.26 432.22L101.97 430.92Z" fill="url(#w474)"/><path d="M303.1 413.7L102.26 432.22L101.69 429.63L101.41 428.32Z" fill="url(#w475)"/><path d="M303.1 413.7L101.69 429.63L101.13 427.02L100.86 425.71Z" fill="url(#w476)"/><path d="M303.1 413.7L101.13 427.02L100.58 424.40L100.31 423.08Z" fill="url(#w477)"/><path d="M303.1 413.7L100.58 424.40L100.05 421.77L99.78 420.45Z" fill="url(#w478)"/><path d="M303.1 413.7L100.05 421.77L99.51 419.13L99.24 417.81Z" fill="url(#w479)"/><path d="M303.1 413.7L99.51 419.13L98.96 416.48L98.69 415.15Z" fill="url(#w480)"/><path d="M303.1 413.7L98.96 416.48L98.42 413.82L98.15 412.48Z" fill="url(#w481)"/></g>
<g clip-path="url(#pc)" fill="#808080" font-size="12.5">
<text x="154" y="640.2" textLength="31" lengthAdjust="spacingAndGlyphs">380nm</text>
<text x="142" y="631.2" textLength="31" lengthAdjust="spacingAndGlyphs">450nm</text>
<text x="133" y="623.2" textLength="31" lengthAdjust="spacingAndGlyphs">460nm</text>
<text x="120" y="604.2" textLength="31" lengthAdjust="spacingAndGlyphs">470nm</text>
<text x="97" y="554.2" textLength="31" lengthAdjust="spacingAndGlyphs">480nm</text>
<text x="65" y="445.2" textLength="31" lengthAdjust="spacingAndGlyphs">490nm</text>
<text x="85" y="282.2" textLength="31" lengthAdjust="spacingAndGlyphs">500nm</text>
<text x="89" y="140.2" textLength="31" lengthAdjust="spacingAndGlyphs">510nm</text>
<text x="130" y="83.2" textLength="31" lengthAdjust="spacingAndGlyphs">520nm</text>
<text x="186" y="102.2" textLength="31" lengthAdjust="spacingAndGlyphs">530nm</text>
<text x="237" y="137.2" textLength="31" lengthAdjust="spacingAndGlyphs">540nm</text>
<text x="287" y="178.2" textLength="31" lengthAdjust="spacingAndGlyphs">550nm</text>
<text x="336" y="224.2" textLength="31" lengthAdjust="spacingAndGlyphs">560nm</text>
<text x="385" y="271.2" textLength="31" lengthAdjust="spacingAndGlyphs">570nm</text>
<text x="432" y="316.2" textLength="31" lengthAdjust="spacingAndGlyphs">580nm</text>
<text x="475" y="358.2" textLength="31" lengthAdjust="spacingAndGlyphs">590nm</text>
<text x="511" y="393.2" textLength="31" lengthAdjust="spacingAndGlyphs">600nm</text>
<text x="538" y="419.2" textLength="31" lengthAdjust="spacingAndGlyphs">610nm</text>
<text x="555" y="436.2" textLength="31" lengthAdjust="spacingAndGlyphs">620nm</text>
<text x="574" y="454.2" textLength="31" lengthAdjust="spacingAndGlyphs">640nm</text>
<text x="585" y="465.2" textLength="31" lengthAdjust="spacingAndGlyphs">780nm</text>
<text x="309" y="419.2" textLength="74" lengthAdjust="spacingAndGlyphs">CIE White Point</text>
<path d="M192 635.5h3M193.5 634v3M180 626.5h3M181.5 625v3M171 618.5h3M172.5 617v3M158 599.5h3M159.5 598v3M135 549.5h3M136.5 548v3M103 440.5h3M104.5 439v3M78 277.5h3M79.5 276v3M82 135.5h3M83.5 134v3M123 78.5h3M124.5 77v3M179 97.5h3M180.5 96v3M230 132.5h3M231.5 131v3M280 173.5h3M281.5 172v3M329 219.5h3M330.5 218v3M378 266.5h3M379.5 265v3M425 311.5h3M426.5 310v3M468 353.5h3M469.5 352v3M504 388.5h3M505.5 387v3M531 414.5h3M532.5 413v3M548 431.5h3M549.5 430v3M567 449.5h3M568.5 448v3M578 460.5h3M579.5 459v3M302 414.5h3M303.5 413v3" stroke="#808080" fill="none" shape-rendering="crispEdges"/>
</g>
<path d="M547.8 429.8L542.9 425.1L537.9 420.5L533.0 416.0L528.1 411.6L523.2 407.3L518.3 403.2L513.5 399.3L508.8 395.5L504.1 391.9L499.4 388.5L494.8 385.3L490.3 382.4L485.8 379.6L481.4 377.0L477.0 374.7L472.7 372.5L468.4 370.6L464.2 368.8L460.0 367.2L455.9 365.8L451.9 364.5L447.9 363.5L444.0 362.5L440.1 361.8L436.3 361.1L421.8 359.8L408.4 360.2L396.1 361.8L384.8 364.3L374.5 367.3L365.2 370.8L356.7 374.4L348.9 378.2L341.9 381.9L335.6 385.7L329.8 389.3L324.5 392.8L319.7 396.2L315.3 399.4L311.2 402.5L307.5 405.5L304.1 408.3L301.0 410.9L298.1 413.5L295.4 415.9L284.6 426.1L276.9 434.0L271.2 440.1L266.8 445.0L263.4 449.0L260.7 452.2L258.5 454.9L256.7 457.2L255.2 459.1L253.9 460.8L252.7 462.2L251.8 463.5L250.9 464.6L250.2 465.6L247.5 469.2L245.8 471.5L244.6 473.1L243.8 474.3" stroke="#808080" stroke-width=".85" fill="none" clip-path="url(#pc)" shape-rendering="crispEdges"/>
<path d="M142.5 34V639M211.5 34V639M280.5 34V639M349.5 34V639M417.5 34V639M486.5 34V639M555.5 34V639M624.5 34V639M73 604.5H695M73 571.5H695M73 537.5H695M73 504.5H695M73 470.5H695M73 437.5H695M73 403.5H695M73 370.5H695M73 336.5H695M73 302.5H695M73 269.5H695M73 235.5H695M73 202.5H695M73 168.5H695M73 135.5H695M73 101.5H695M73 68.5H695" stroke="#999900" fill="none" shape-rendering="crispEdges"/>
<path d="M280.5 408.5L376.5 348.5L376.5 382.5L280.5 453.5Z" stroke="#000" stroke-width=".85" fill="none" shape-rendering="crispEdges"/>
<path d="M376.5 348.5L417.5 343.5L417.5 382.5L376.5 382.5Z" stroke="#000" stroke-width=".85" fill="none" shape-rendering="crispEdges"/>
<g fill="#000" shape-rendering="crispEdges"><rect x="375" y="381" width="3" height="3"/><rect x="416" y="381" width="3" height="3"/><rect x="279" y="452" width="3" height="3"/><rect x="279" y="407" width="3" height="3"/><rect x="416" y="342" width="3" height="3"/><rect x="375" y="347" width="3" height="3"/></g>
<path d="M339.5 34V638M74 379.5H695" stroke="#ff0000" fill="none" shape-rendering="crispEdges"/>
<circle cx="339.5" cy="379.5" r="2.6" fill="#ff0000" shape-rendering="crispEdges"/>
<g font-size="11" fill="#000" stroke="#000" stroke-width=".15">
<text x="72" y="656" text-anchor="middle" textLength="32.5" lengthAdjust="spacingAndGlyphs">0.0000</text>
<text x="63" y="642" text-anchor="end" textLength="32.5" lengthAdjust="spacingAndGlyphs">0.0000</text>
<text x="141" y="656" text-anchor="middle" textLength="32.5" lengthAdjust="spacingAndGlyphs">0.1000</text>
<text x="63" y="575" text-anchor="end" textLength="32.5" lengthAdjust="spacingAndGlyphs">0.1000</text>
<text x="210" y="656" text-anchor="middle" textLength="32.5" lengthAdjust="spacingAndGlyphs">0.2000</text>
<text x="63" y="508" text-anchor="end" textLength="32.5" lengthAdjust="spacingAndGlyphs">0.2000</text>
<text x="279" y="656" text-anchor="middle" textLength="32.5" lengthAdjust="spacingAndGlyphs">0.3000</text>
<text x="63" y="441" text-anchor="end" textLength="32.5" lengthAdjust="spacingAndGlyphs">0.3000</text>
<text x="348" y="656" text-anchor="middle" textLength="32.5" lengthAdjust="spacingAndGlyphs">0.4000</text>
<text x="63" y="374" text-anchor="end" textLength="32.5" lengthAdjust="spacingAndGlyphs">0.4000</text>
<text x="416" y="656" text-anchor="middle" textLength="32.5" lengthAdjust="spacingAndGlyphs">0.5000</text>
<text x="63" y="306" text-anchor="end" textLength="32.5" lengthAdjust="spacingAndGlyphs">0.5000</text>
<text x="485" y="656" text-anchor="middle" textLength="32.5" lengthAdjust="spacingAndGlyphs">0.6000</text>
<text x="63" y="239" text-anchor="end" textLength="32.5" lengthAdjust="spacingAndGlyphs">0.6000</text>
<text x="554" y="656" text-anchor="middle" textLength="32.5" lengthAdjust="spacingAndGlyphs">0.7000</text>
<text x="63" y="172" text-anchor="end" textLength="32.5" lengthAdjust="spacingAndGlyphs">0.7000</text>
<text x="623" y="656" text-anchor="middle" textLength="32.5" lengthAdjust="spacingAndGlyphs">0.8000</text>
<text x="63" y="105" text-anchor="end" textLength="32.5" lengthAdjust="spacingAndGlyphs">0.8000</text>
<text x="692" y="656" text-anchor="middle" textLength="32.5" lengthAdjust="spacingAndGlyphs">0.9000</text>
<text x="63" y="38" text-anchor="end" textLength="32.5" lengthAdjust="spacingAndGlyphs">0.9000</text>
<text x="383.5" y="675" text-anchor="middle">x</text>
<text transform="translate(23.2,338.5) rotate(-90)" text-anchor="middle">y</text>
</g>
<path d="M73.5 640v5M66 638.5h5M142.5 640v5M66 571.5h5M211.5 640v5M66 504.5h5M280.5 640v5M66 437.5h5M349.5 640v5M66 370.5h5M417.5 640v5M66 302.5h5M486.5 640v5M66 235.5h5M555.5 640v5M66 168.5h5M624.5 640v5M66 101.5h5M693.5 640v5M66 34.5h5" stroke="#000" fill="none" shape-rendering="crispEdges"/>
</svg>
</body></html>
